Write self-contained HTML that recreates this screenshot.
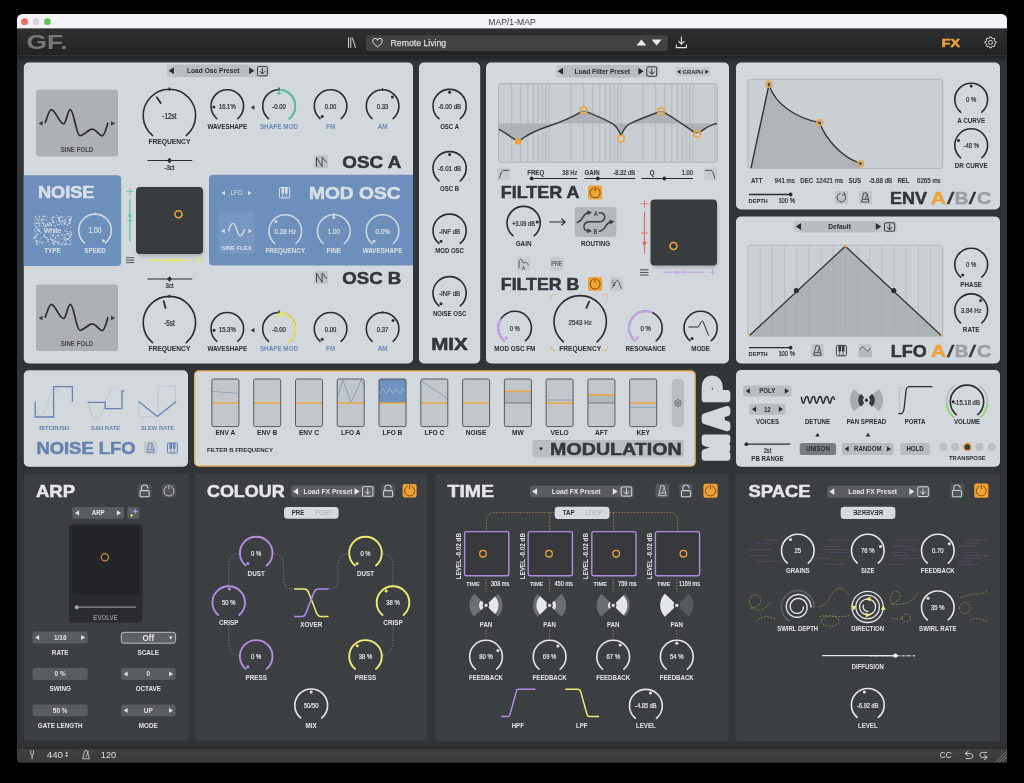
<!DOCTYPE html>
<html lang="en"><head><meta charset="utf-8"><title>MAP/1-MAP</title>
<style>html,body{margin:0;padding:0;background:#000;overflow:hidden}svg{display:block;font-family:"Liberation Sans",sans-serif;will-change:transform}text{white-space:pre}</style></head>
<body>
<svg width="1024" height="783" viewBox="0 0 1024 783">
<defs><linearGradient id="tb" x1="0" y1="0" x2="0" y2="1"><stop offset="0" stop-color="#303032"/><stop offset="1" stop-color="#222224"/></linearGradient><linearGradient id="bb" x1="0" y1="0" x2="0" y2="1"><stop offset="0" stop-color="#3f4042"/><stop offset="1" stop-color="#38393b"/></linearGradient><clipPath id="win"><path d="M17 19.5a5.5 5.5 0 0 1 5.5-5.5H1001.5a5.5 5.5 0 0 1 5.5 5.5V762.6H21a4 4 0 0 1-4-4Z"/></clipPath><linearGradient id="ts" x1="0" y1="0" x2="0" y2="1"><stop offset="0" stop-color="#1e1f20"/><stop offset="1" stop-color="#323537"/></linearGradient><linearGradient id="bs" x1="0" y1="0" x2="0" y2="1"><stop offset="0" stop-color="#323537"/><stop offset="1" stop-color="#2b2c2e"/></linearGradient><filter id="sh" x="-20%" y="-20%" width="140%" height="150%"><feGaussianBlur stdDeviation="1.6"/></filter></defs>
<rect width="1024" height="783" fill="#000"/>
<g clip-path="url(#win)">
<rect x="17.0" y="14.0" width="990.0" height="749.0" rx="0" fill="#323537"/>
<rect x="17.0" y="14.0" width="990.0" height="14.6" rx="0" fill="#f5f3f7"/>
<circle cx="24.5" cy="21.7" r="3.35" fill="#ee6a5e"/>
<circle cx="36.1" cy="21.7" r="3.35" fill="#d5d3d6"/>
<circle cx="47.4" cy="21.7" r="3.35" fill="#61c354"/>
<text x="512.0" y="24.8" font-size="8.6" font-weight="400" text-anchor="middle" fill="#3a3a3c" textLength="47.3" lengthAdjust="spacingAndGlyphs">MAP/1-MAP</text>
<rect x="17.0" y="28.6" width="990.0" height="26.9" rx="0" fill="url(#tb)"/>
<rect x="17.0" y="55.5" width="990.0" height="7.0" rx="0" fill="url(#ts)"/>
<line x1="17.0" y1="55.4" x2="1007.0" y2="55.4" stroke="#3a3b3c" stroke-width="0.6"/>
<rect x="17.0" y="742.0" width="990.0" height="7.0" rx="0" fill="url(#bs)"/>
<rect x="17.0" y="749.0" width="990.0" height="14.0" rx="0" fill="url(#bb)"/>
<text x="26.6" y="49.4" font-size="19.5" font-weight="700" text-anchor="start" fill="#77787a" textLength="41.0" lengthAdjust="spacingAndGlyphs">GF.</text>
<line x1="348.5" y1="37.4" x2="348.5" y2="47.8" stroke="#d8d8da" stroke-width="1"/>
<line x1="350.8" y1="37.4" x2="350.8" y2="47.8" stroke="#d8d8da" stroke-width="1"/>
<line x1="352.3" y1="37.6" x2="355.5" y2="47.8" stroke="#d8d8da" stroke-width="1"/>
<rect x="366.0" y="35.2" width="301.8" height="15.8" rx="3" fill="#424244"/>
<path d="M377.5 46.8C374.2 44.4 372.8 42.8 372.8 41.1A2.35 2.35 0 0 1 377.5 40.4A2.35 2.35 0 0 1 382.2 41.1C382.2 42.8 380.8 44.4 377.5 46.8Z" fill="none" stroke="#e4e4e6" stroke-width="1" stroke-linejoin="round"/>
<text x="390.6" y="46.4" font-size="9.4" font-weight="400" text-anchor="start" fill="#dededf" textLength="55.6" lengthAdjust="spacingAndGlyphs" stroke="#dededf" stroke-width="0.25">Remote Living</text>
<polygon points="636.4,45.4 646.4,45.4 641.4,39.4" fill="#ececee"/>
<polygon points="651.6,39.6 661.6,39.6 656.6,45.6" fill="#ececee"/>
<path d="M681.4 36.6V44M678.4 41.2L681.4 44.2L684.4 41.2M676.4 44.4V47.6H686.4V44.4" fill="none" stroke="#e4e4e6" stroke-width="1.1"/>
<text x="941.8" y="46.7" font-size="11" font-weight="700" text-anchor="start" fill="#f0a335" textLength="18.2" lengthAdjust="spacingAndGlyphs" stroke="#f0a335" stroke-width="0.5" stroke-linejoin="round">FX</text>
<polygon points="989.87,36.84 991.13,36.84 991.70,38.20 992.62,38.58 993.99,38.02 994.88,38.91 994.32,40.28 994.70,41.20 996.06,41.77 996.06,43.03 994.70,43.60 994.32,44.52 994.88,45.89 993.99,46.78 992.62,46.22 991.70,46.60 991.13,47.96 989.87,47.96 989.30,46.60 988.38,46.22 987.01,46.78 986.12,45.89 986.68,44.52 986.30,43.60 984.94,43.03 984.94,41.77 986.30,41.20 986.68,40.28 986.12,38.91 987.01,38.02 988.38,38.58 989.30,38.20" fill="none" stroke="#dcdcde" stroke-width="1" stroke-linejoin="round"/>
<circle cx="990.5" cy="42.4" r="2.016" fill="none" stroke="#dcdcde" stroke-width="1"/>
<rect x="23.8" y="62.5" width="389.2" height="301.0" rx="5" fill="#d2d8dc"/>
<rect x="419.0" y="62.5" width="61.2" height="301.0" rx="5" fill="#d2d8dc"/>
<rect x="486.0" y="62.5" width="243.0" height="301.0" rx="5" fill="#d2d8dc"/>
<rect x="736.0" y="62.5" width="264.0" height="147.0" rx="5" fill="#d2d8dc"/>
<rect x="736.0" y="216.5" width="264.0" height="147.0" rx="5" fill="#d2d8dc"/>
<rect x="23.8" y="370.3" width="164.2" height="96.4" rx="5" fill="#d2d8dc"/>
<rect x="736.0" y="370.0" width="264.0" height="96.7" rx="5" fill="#d2d8dc"/>
<rect x="194.7" y="371.0" width="500.4" height="95.0" rx="4" fill="#d2d8dc" stroke="#e6b062" stroke-width="1.4"/>
<rect x="23.8" y="473.8" width="165.2" height="266.8" rx="3.5" fill="#3b3f42"/>
<rect x="194.6" y="473.8" width="232.9" height="266.8" rx="3.5" fill="#3b3f42"/>
<rect x="435.4" y="473.8" width="293.4" height="267.0" rx="3.5" fill="#3b3f42"/>
<rect x="735.4" y="473.8" width="264.6" height="267.2" rx="3.5" fill="#3b3f42"/>
<rect x="167.0" y="64.6" width="102.4" height="12.4" rx="2.5" fill="#c1c7ca"/>
<rect x="174.8" y="64.6" width="73.8" height="12.4" rx="0" fill="#b7bdc0"/>
<polygon points="173.9,67.3 173.9,74.3 168.5,70.8" fill="#2b2d30"/>
<polygon points="249.1,67.3 249.1,74.3 254.5,70.8" fill="#2b2d30"/>
<text x="213.2" y="73.2" font-size="6.8" font-weight="700" text-anchor="middle" fill="#2b2d30" textLength="52.5" lengthAdjust="spacingAndGlyphs">Load Osc Preset</text>
<rect x="257.5" y="66.5" width="9.8" height="9.4" rx="1.2" fill="none" stroke="#2b2d30" stroke-width="0.9"/>
<path d="M262.4 68.2V73.8M259.8 71.2L262.4 74.0L265.0 71.2" fill="none" stroke="#2b2d30" stroke-width="0.9"/>
<rect x="36.0" y="89.8" width="82.0" height="66.7" rx="3" fill="#adb1b4"/>
<path d="M45.3 122.4C47 118.0 49 109.6 51.4 109.6C55 109.6 59.5 123.8 63.5 123.8C66.5 123.8 67.5 109.6 70.3 109.6C74 109.6 76 135.6 80 135.6C84 135.6 88.5 129.2 92.2 129.2C96 129.2 99 135.8 102.2 135.8C104.6 135.8 106.4 128.0 107.8 123.2" fill="none" stroke="#2b2d30" stroke-width="1.7" stroke-linecap="round"/>
<polygon points="42.6,121.0 42.6,125.8 38.6,123.4" fill="#3a3c3f"/>
<polygon points="111.0,121.0 111.0,125.8 115.0,123.4" fill="#3a3c3f"/>
<text x="77.0" y="151.6" font-size="6.4" font-weight="700" text-anchor="middle" fill="#45474a" textLength="32.6" lengthAdjust="spacingAndGlyphs">SINE FOLD</text>
<path d="M152.56 135.57A26.2 26.2 0 1 1 186.24 135.57" fill="none" stroke="#2b2d30" stroke-width="1.6" stroke-linecap="round"/>
<line x1="156.7" y1="97.3" x2="160.7" y2="103.0" stroke="#2b2d30" stroke-width="1.8" stroke-linecap="round"/>
<text x="169.4" y="118.5" font-size="8.2" font-weight="400" text-anchor="middle" fill="#2b2d30" textLength="14.2" lengthAdjust="spacingAndGlyphs" stroke="#2b2d30" stroke-width="0.22">-12st</text>
<text x="169.4" y="143.6" font-size="7" font-weight="700" text-anchor="middle" fill="#2b2d30" textLength="42.0" lengthAdjust="spacingAndGlyphs">FREQUENCY</text>
<line x1="169.4" y1="87.6" x2="169.4" y2="90.8" stroke="#2b2d30" stroke-width="1.6"/>
<line x1="147.5" y1="160.5" x2="192.2" y2="160.5" stroke="#2b2d30" stroke-width="1.2"/>
<polygon points="169.5,157.7 172,160.5 169.5,163.3 167,160.5" fill="#2b2d30"/>
<text x="169.5" y="169.8" font-size="7.8" font-weight="400" text-anchor="middle" fill="#2b2d30" textLength="10.1" lengthAdjust="spacingAndGlyphs" stroke="#2b2d30" stroke-width="0.22">-3ct</text>
<path d="M216.82 118.59A16.3 16.3 0 1 1 237.78 118.59" fill="none" stroke="#2b2d30" stroke-width="1.6" stroke-linecap="round"/>
<circle cx="213.9" cy="107.0" r="1.5" fill="#2b2d30"/>
<text x="227.3" y="108.8" font-size="7.6" font-weight="400" text-anchor="middle" fill="#2b2d30" textLength="16.8" lengthAdjust="spacingAndGlyphs" stroke="#2b2d30" stroke-width="0.22">16.1%</text>
<text x="227.3" y="128.6" font-size="6.6" font-weight="700" text-anchor="middle" fill="#2b2d30" textLength="39.8" lengthAdjust="spacingAndGlyphs">WAVESHAPE</text>
<polygon points="254.4,105.2 254.4,109.8 250.8,107.5" fill="#2b2d30"/>
<path d="M268.52 118.59A16.3 16.3 0 1 1 289.48 118.59" fill="none" stroke="#2b2d30" stroke-width="1.6" stroke-linecap="round"/>
<path d="M279.00 89.80A16.3 16.3 0 0 1 289.48 118.59" fill="none" stroke="#62c2ab" stroke-width="2.0" stroke-linecap="round"/>
<text x="279.0" y="108.8" font-size="7.6" font-weight="400" text-anchor="middle" fill="#2b2d30" textLength="13.5" lengthAdjust="spacingAndGlyphs" stroke="#2b2d30" stroke-width="0.22">-0.00</text>
<text x="279.0" y="128.6" font-size="6.6" font-weight="700" text-anchor="middle" fill="#6a8cba" textLength="38.2" lengthAdjust="spacingAndGlyphs">SHAPE MOD</text>
<line x1="279.0" y1="87.5" x2="279.0" y2="90.3" stroke="#2b2d30" stroke-width="1.2"/>
<circle cx="279.0" cy="93.2" r="1.7" fill="#62c2ab"/>
<path d="M320.12 118.59A16.3 16.3 0 1 1 341.08 118.59" fill="none" stroke="#2b2d30" stroke-width="1.6" stroke-linecap="round"/>
<circle cx="322.2" cy="116.5" r="1.5" fill="#2b2d30"/>
<text x="330.6" y="108.8" font-size="7.6" font-weight="400" text-anchor="middle" fill="#2b2d30" textLength="11.5" lengthAdjust="spacingAndGlyphs" stroke="#2b2d30" stroke-width="0.22">0.00</text>
<text x="330.6" y="128.6" font-size="6.6" font-weight="700" text-anchor="middle" fill="#6a8cba" textLength="9.1" lengthAdjust="spacingAndGlyphs">FM</text>
<path d="M372.12 118.59A16.3 16.3 0 1 1 393.08 118.59" fill="none" stroke="#2b2d30" stroke-width="1.6" stroke-linecap="round"/>
<line x1="382.6" y1="88.2" x2="382.6" y2="91.0" stroke="#2b2d30" stroke-width="1.2"/>
<circle cx="392.4" cy="97.0" r="1.5" fill="#2b2d30"/>
<text x="382.6" y="108.8" font-size="7.6" font-weight="400" text-anchor="middle" fill="#2b2d30" textLength="11.5" lengthAdjust="spacingAndGlyphs" stroke="#2b2d30" stroke-width="0.22">0.33</text>
<text x="382.6" y="128.6" font-size="6.6" font-weight="700" text-anchor="middle" fill="#6a8cba" textLength="9.8" lengthAdjust="spacingAndGlyphs">AM</text>
<rect x="314.5" y="155.3" width="13.3" height="12.9" rx="1" fill="#bcc2c5"/>
<path d="M316.5 166.7V157.3L322.1 166.7V157.3L326.8 162.8" fill="none" stroke="#3a3c40" stroke-width="0.9"/>
<text x="342.3" y="168.1" font-size="16.2" font-weight="700" text-anchor="start" fill="#34363a" textLength="59.0" lengthAdjust="spacingAndGlyphs" stroke="#34363a" stroke-width="0.5" stroke-linejoin="round">OSC A</text>
<path d="M23.8 175.2H117.2a4 4 0 0 1 4 4V262a4 4 0 0 1-4 4H23.8Z" fill="#6c8fbb"/>
<text x="37.9" y="197.9" font-size="16.2" font-weight="700" text-anchor="start" fill="#d9e0e5" textLength="56.6" lengthAdjust="spacingAndGlyphs" stroke="#d9e0e5" stroke-width="0.5" stroke-linejoin="round">NOISE</text>
<rect x="45.8" y="219.6" width="1.2" height="1.2" rx="0" fill="#dfe6ec" opacity="0.58"/>
<rect x="53.9" y="225.8" width="0.7" height="0.7" rx="0" fill="#dfe6ec" opacity="0.78"/>
<rect x="34.9" y="227.8" width="0.7" height="0.7" rx="0" fill="#dfe6ec" opacity="0.59"/>
<rect x="49.6" y="239.2" width="0.7" height="0.7" rx="0" fill="#dfe6ec" opacity="0.65"/>
<rect x="57.3" y="242.7" width="1.1" height="1.1" rx="0" fill="#dfe6ec" opacity="0.73"/>
<rect x="70.6" y="216.6" width="1.4" height="1.4" rx="0" fill="#dfe6ec" opacity="0.68"/>
<rect x="39.0" y="218.6" width="0.9" height="0.9" rx="0" fill="#dfe6ec" opacity="0.92"/>
<rect x="40.4" y="232.1" width="1.2" height="1.2" rx="0" fill="#dfe6ec" opacity="0.72"/>
<rect x="54.3" y="217.0" width="0.7" height="0.7" rx="0" fill="#dfe6ec" opacity="0.64"/>
<rect x="50.7" y="223.9" width="1.3" height="1.3" rx="0" fill="#dfe6ec" opacity="0.86"/>
<rect x="53.5" y="240.6" width="1.3" height="1.3" rx="0" fill="#dfe6ec" opacity="0.68"/>
<rect x="70.7" y="218.6" width="1.0" height="1.0" rx="0" fill="#dfe6ec" opacity="0.89"/>
<rect x="39.3" y="229.4" width="0.6" height="0.6" rx="0" fill="#dfe6ec" opacity="0.85"/>
<rect x="66.8" y="224.3" width="1.2" height="1.2" rx="0" fill="#dfe6ec" opacity="0.82"/>
<rect x="65.4" y="242.6" width="1.0" height="1.0" rx="0" fill="#dfe6ec" opacity="0.85"/>
<rect x="35.8" y="235.5" width="1.2" height="1.2" rx="0" fill="#dfe6ec" opacity="1.00"/>
<rect x="64.7" y="223.5" width="0.9" height="0.9" rx="0" fill="#dfe6ec" opacity="0.85"/>
<rect x="34.4" y="228.6" width="0.8" height="0.8" rx="0" fill="#dfe6ec" opacity="0.60"/>
<rect x="35.7" y="237.5" width="0.7" height="0.7" rx="0" fill="#dfe6ec" opacity="0.66"/>
<rect x="48.4" y="240.5" width="0.7" height="0.7" rx="0" fill="#dfe6ec" opacity="0.75"/>
<rect x="54.4" y="240.8" width="1.3" height="1.3" rx="0" fill="#dfe6ec" opacity="0.94"/>
<rect x="47.1" y="240.8" width="1.5" height="1.5" rx="0" fill="#dfe6ec" opacity="0.62"/>
<rect x="40.2" y="221.9" width="0.8" height="0.8" rx="0" fill="#dfe6ec" opacity="0.77"/>
<rect x="55.9" y="222.8" width="0.6" height="0.6" rx="0" fill="#dfe6ec" opacity="0.74"/>
<rect x="69.7" y="235.2" width="1.1" height="1.1" rx="0" fill="#dfe6ec" opacity="0.83"/>
<rect x="59.2" y="216.8" width="1.4" height="1.4" rx="0" fill="#dfe6ec" opacity="0.90"/>
<rect x="66.7" y="238.3" width="1.0" height="1.0" rx="0" fill="#dfe6ec" opacity="0.73"/>
<rect x="37.4" y="233.6" width="0.7" height="0.7" rx="0" fill="#dfe6ec" opacity="0.58"/>
<rect x="41.4" y="219.9" width="0.9" height="0.9" rx="0" fill="#dfe6ec" opacity="0.57"/>
<rect x="33.5" y="219.6" width="0.7" height="0.7" rx="0" fill="#dfe6ec" opacity="0.71"/>
<rect x="34.5" y="240.6" width="1.2" height="1.2" rx="0" fill="#dfe6ec" opacity="0.62"/>
<rect x="43.1" y="225.3" width="0.9" height="0.9" rx="0" fill="#dfe6ec" opacity="0.61"/>
<rect x="65.8" y="244.0" width="1.0" height="1.0" rx="0" fill="#dfe6ec" opacity="0.77"/>
<rect x="36.8" y="218.2" width="0.9" height="0.9" rx="0" fill="#dfe6ec" opacity="0.67"/>
<rect x="65.0" y="219.9" width="0.6" height="0.6" rx="0" fill="#dfe6ec" opacity="0.98"/>
<rect x="53.6" y="219.5" width="1.1" height="1.1" rx="0" fill="#dfe6ec" opacity="0.56"/>
<rect x="53.6" y="243.6" width="1.4" height="1.4" rx="0" fill="#dfe6ec" opacity="0.86"/>
<rect x="43.4" y="225.8" width="0.8" height="0.8" rx="0" fill="#dfe6ec" opacity="0.90"/>
<rect x="53.7" y="237.8" width="0.9" height="0.9" rx="0" fill="#dfe6ec" opacity="0.65"/>
<rect x="64.3" y="243.8" width="1.4" height="1.4" rx="0" fill="#dfe6ec" opacity="0.91"/>
<rect x="64.6" y="236.7" width="0.8" height="0.8" rx="0" fill="#dfe6ec" opacity="0.78"/>
<rect x="47.0" y="216.0" width="0.6" height="0.6" rx="0" fill="#dfe6ec" opacity="0.68"/>
<rect x="43.3" y="235.3" width="1.5" height="1.5" rx="0" fill="#dfe6ec" opacity="0.75"/>
<rect x="69.1" y="243.9" width="1.5" height="1.5" rx="0" fill="#dfe6ec" opacity="0.71"/>
<rect x="41.9" y="221.8" width="0.8" height="0.8" rx="0" fill="#dfe6ec" opacity="0.64"/>
<rect x="57.2" y="241.3" width="1.4" height="1.4" rx="0" fill="#dfe6ec" opacity="0.77"/>
<rect x="58.3" y="238.4" width="0.7" height="0.7" rx="0" fill="#dfe6ec" opacity="0.85"/>
<rect x="68.1" y="237.9" width="1.3" height="1.3" rx="0" fill="#dfe6ec" opacity="0.77"/>
<rect x="40.3" y="238.1" width="0.9" height="0.9" rx="0" fill="#dfe6ec" opacity="0.91"/>
<rect x="70.4" y="226.7" width="1.0" height="1.0" rx="0" fill="#dfe6ec" opacity="0.98"/>
<rect x="61.0" y="220.1" width="0.7" height="0.7" rx="0" fill="#dfe6ec" opacity="0.62"/>
<rect x="67.9" y="238.6" width="0.7" height="0.7" rx="0" fill="#dfe6ec" opacity="0.92"/>
<rect x="70.8" y="234.3" width="0.9" height="0.9" rx="0" fill="#dfe6ec" opacity="0.80"/>
<rect x="38.5" y="215.6" width="1.5" height="1.5" rx="0" fill="#dfe6ec" opacity="0.84"/>
<rect x="53.5" y="242.3" width="1.0" height="1.0" rx="0" fill="#dfe6ec" opacity="0.94"/>
<rect x="64.9" y="221.3" width="0.8" height="0.8" rx="0" fill="#dfe6ec" opacity="0.68"/>
<rect x="38.5" y="241.6" width="0.9" height="0.9" rx="0" fill="#dfe6ec" opacity="0.76"/>
<rect x="55.7" y="241.4" width="1.0" height="1.0" rx="0" fill="#dfe6ec" opacity="0.96"/>
<rect x="53.4" y="215.7" width="1.0" height="1.0" rx="0" fill="#dfe6ec" opacity="0.63"/>
<rect x="33.6" y="238.4" width="0.8" height="0.8" rx="0" fill="#dfe6ec" opacity="0.76"/>
<rect x="54.6" y="237.9" width="0.7" height="0.7" rx="0" fill="#dfe6ec" opacity="0.80"/>
<rect x="42.9" y="223.2" width="1.3" height="1.3" rx="0" fill="#dfe6ec" opacity="0.78"/>
<rect x="54.8" y="237.2" width="1.4" height="1.4" rx="0" fill="#dfe6ec" opacity="0.75"/>
<rect x="53.0" y="235.3" width="1.0" height="1.0" rx="0" fill="#dfe6ec" opacity="0.79"/>
<rect x="51.7" y="242.5" width="1.2" height="1.2" rx="0" fill="#dfe6ec" opacity="0.94"/>
<rect x="69.3" y="222.7" width="1.1" height="1.1" rx="0" fill="#dfe6ec" opacity="0.97"/>
<rect x="65.4" y="219.2" width="0.7" height="0.7" rx="0" fill="#dfe6ec" opacity="0.75"/>
<rect x="36.3" y="222.2" width="0.7" height="0.7" rx="0" fill="#dfe6ec" opacity="0.85"/>
<rect x="63.3" y="241.2" width="0.7" height="0.7" rx="0" fill="#dfe6ec" opacity="0.87"/>
<rect x="58.6" y="219.3" width="1.4" height="1.4" rx="0" fill="#dfe6ec" opacity="0.99"/>
<rect x="41.8" y="242.8" width="1.0" height="1.0" rx="0" fill="#dfe6ec" opacity="0.77"/>
<rect x="71.1" y="239.3" width="0.7" height="0.7" rx="0" fill="#dfe6ec" opacity="0.74"/>
<rect x="53.1" y="225.0" width="0.8" height="0.8" rx="0" fill="#dfe6ec" opacity="0.69"/>
<rect x="60.9" y="215.8" width="1.1" height="1.1" rx="0" fill="#dfe6ec" opacity="0.75"/>
<rect x="34.2" y="224.8" width="1.2" height="1.2" rx="0" fill="#dfe6ec" opacity="0.78"/>
<rect x="35.9" y="243.8" width="1.3" height="1.3" rx="0" fill="#dfe6ec" opacity="0.99"/>
<rect x="37.5" y="222.9" width="0.6" height="0.6" rx="0" fill="#dfe6ec" opacity="0.90"/>
<rect x="43.8" y="219.0" width="1.0" height="1.0" rx="0" fill="#dfe6ec" opacity="0.96"/>
<rect x="64.6" y="222.7" width="0.7" height="0.7" rx="0" fill="#dfe6ec" opacity="0.96"/>
<rect x="55.2" y="235.5" width="0.7" height="0.7" rx="0" fill="#dfe6ec" opacity="0.58"/>
<rect x="36.3" y="242.4" width="1.2" height="1.2" rx="0" fill="#dfe6ec" opacity="0.91"/>
<rect x="36.7" y="240.0" width="0.7" height="0.7" rx="0" fill="#dfe6ec" opacity="0.94"/>
<rect x="50.7" y="225.0" width="1.1" height="1.1" rx="0" fill="#dfe6ec" opacity="0.97"/>
<rect x="43.7" y="218.9" width="1.1" height="1.1" rx="0" fill="#dfe6ec" opacity="0.66"/>
<rect x="37.7" y="219.9" width="0.6" height="0.6" rx="0" fill="#dfe6ec" opacity="0.64"/>
<rect x="45.4" y="224.0" width="1.3" height="1.3" rx="0" fill="#dfe6ec" opacity="0.68"/>
<rect x="52.5" y="220.4" width="0.9" height="0.9" rx="0" fill="#dfe6ec" opacity="0.56"/>
<rect x="43.0" y="215.6" width="1.3" height="1.3" rx="0" fill="#dfe6ec" opacity="0.80"/>
<rect x="69.0" y="218.3" width="1.3" height="1.3" rx="0" fill="#dfe6ec" opacity="0.74"/>
<rect x="52.3" y="239.4" width="1.0" height="1.0" rx="0" fill="#dfe6ec" opacity="0.78"/>
<rect x="59.6" y="243.7" width="0.9" height="0.9" rx="0" fill="#dfe6ec" opacity="0.92"/>
<rect x="60.4" y="233.6" width="1.0" height="1.0" rx="0" fill="#dfe6ec" opacity="0.71"/>
<rect x="35.6" y="219.0" width="0.7" height="0.7" rx="0" fill="#dfe6ec" opacity="0.88"/>
<rect x="43.2" y="219.9" width="0.7" height="0.7" rx="0" fill="#dfe6ec" opacity="0.93"/>
<rect x="66.6" y="234.6" width="0.9" height="0.9" rx="0" fill="#dfe6ec" opacity="0.66"/>
<rect x="39.5" y="228.1" width="0.8" height="0.8" rx="0" fill="#dfe6ec" opacity="0.98"/>
<rect x="70.5" y="231.1" width="0.8" height="0.8" rx="0" fill="#dfe6ec" opacity="0.98"/>
<rect x="45.3" y="225.5" width="0.6" height="0.6" rx="0" fill="#dfe6ec" opacity="0.72"/>
<rect x="33.7" y="222.9" width="0.7" height="0.7" rx="0" fill="#dfe6ec" opacity="0.73"/>
<rect x="35.1" y="215.9" width="0.9" height="0.9" rx="0" fill="#dfe6ec" opacity="0.65"/>
<rect x="62.0" y="234.3" width="1.2" height="1.2" rx="0" fill="#dfe6ec" opacity="0.95"/>
<rect x="48.3" y="224.7" width="1.5" height="1.5" rx="0" fill="#dfe6ec" opacity="0.62"/>
<rect x="61.0" y="233.9" width="0.6" height="0.6" rx="0" fill="#dfe6ec" opacity="0.93"/>
<rect x="67.4" y="233.4" width="1.3" height="1.3" rx="0" fill="#dfe6ec" opacity="0.92"/>
<rect x="38.8" y="230.4" width="1.1" height="1.1" rx="0" fill="#dfe6ec" opacity="0.93"/>
<rect x="64.1" y="239.2" width="1.1" height="1.1" rx="0" fill="#dfe6ec" opacity="0.95"/>
<rect x="59.5" y="235.3" width="0.8" height="0.8" rx="0" fill="#dfe6ec" opacity="0.56"/>
<rect x="38.6" y="225.7" width="0.7" height="0.7" rx="0" fill="#dfe6ec" opacity="0.93"/>
<rect x="57.3" y="234.9" width="1.0" height="1.0" rx="0" fill="#dfe6ec" opacity="0.55"/>
<rect x="63.8" y="236.9" width="1.1" height="1.1" rx="0" fill="#dfe6ec" opacity="0.79"/>
<rect x="58.6" y="217.1" width="1.3" height="1.3" rx="0" fill="#dfe6ec" opacity="0.66"/>
<rect x="36.3" y="222.9" width="1.3" height="1.3" rx="0" fill="#dfe6ec" opacity="0.64"/>
<rect x="61.6" y="243.5" width="1.0" height="1.0" rx="0" fill="#dfe6ec" opacity="0.72"/>
<rect x="51.7" y="235.0" width="1.3" height="1.3" rx="0" fill="#dfe6ec" opacity="0.83"/>
<rect x="57.9" y="217.4" width="0.7" height="0.7" rx="0" fill="#dfe6ec" opacity="0.66"/>
<rect x="61.7" y="224.0" width="1.1" height="1.1" rx="0" fill="#dfe6ec" opacity="0.56"/>
<rect x="35.8" y="223.0" width="1.2" height="1.2" rx="0" fill="#dfe6ec" opacity="0.86"/>
<rect x="59.2" y="223.6" width="1.1" height="1.1" rx="0" fill="#dfe6ec" opacity="0.76"/>
<rect x="51.2" y="218.6" width="1.4" height="1.4" rx="0" fill="#dfe6ec" opacity="0.64"/>
<rect x="70.7" y="242.4" width="0.6" height="0.6" rx="0" fill="#dfe6ec" opacity="0.76"/>
<rect x="64.7" y="243.3" width="1.0" height="1.0" rx="0" fill="#dfe6ec" opacity="0.67"/>
<rect x="41.5" y="242.6" width="0.8" height="0.8" rx="0" fill="#dfe6ec" opacity="0.81"/>
<rect x="38.9" y="230.4" width="1.5" height="1.5" rx="0" fill="#dfe6ec" opacity="0.61"/>
<rect x="64.7" y="230.0" width="1.4" height="1.4" rx="0" fill="#dfe6ec" opacity="0.87"/>
<rect x="42.3" y="241.2" width="1.0" height="1.0" rx="0" fill="#dfe6ec" opacity="0.56"/>
<rect x="33.6" y="229.5" width="1.0" height="1.0" rx="0" fill="#dfe6ec" opacity="0.69"/>
<rect x="38.8" y="225.2" width="0.9" height="0.9" rx="0" fill="#dfe6ec" opacity="0.93"/>
<rect x="33.6" y="237.0" width="1.4" height="1.4" rx="0" fill="#dfe6ec" opacity="0.60"/>
<rect x="68.7" y="235.9" width="1.4" height="1.4" rx="0" fill="#dfe6ec" opacity="0.68"/>
<rect x="71.5" y="232.3" width="0.9" height="0.9" rx="0" fill="#dfe6ec" opacity="0.74"/>
<rect x="44.0" y="216.6" width="0.7" height="0.7" rx="0" fill="#dfe6ec" opacity="0.93"/>
<rect x="44.4" y="242.3" width="0.8" height="0.8" rx="0" fill="#dfe6ec" opacity="0.67"/>
<rect x="52.9" y="220.7" width="0.9" height="0.9" rx="0" fill="#dfe6ec" opacity="0.98"/>
<rect x="67.1" y="238.7" width="1.2" height="1.2" rx="0" fill="#dfe6ec" opacity="0.96"/>
<rect x="69.2" y="231.1" width="1.2" height="1.2" rx="0" fill="#dfe6ec" opacity="0.57"/>
<rect x="62.1" y="233.9" width="0.9" height="0.9" rx="0" fill="#dfe6ec" opacity="0.57"/>
<rect x="68.7" y="218.9" width="1.0" height="1.0" rx="0" fill="#dfe6ec" opacity="0.70"/>
<rect x="44.8" y="236.6" width="1.5" height="1.5" rx="0" fill="#dfe6ec" opacity="0.67"/>
<rect x="58.4" y="223.9" width="1.1" height="1.1" rx="0" fill="#dfe6ec" opacity="0.73"/>
<rect x="39.9" y="219.9" width="0.8" height="0.8" rx="0" fill="#dfe6ec" opacity="0.96"/>
<rect x="52.4" y="221.6" width="1.4" height="1.4" rx="0" fill="#dfe6ec" opacity="1.00"/>
<rect x="50.6" y="219.2" width="0.8" height="0.8" rx="0" fill="#dfe6ec" opacity="0.59"/>
<rect x="46.5" y="217.8" width="0.8" height="0.8" rx="0" fill="#dfe6ec" opacity="0.67"/>
<rect x="55.1" y="240.9" width="1.3" height="1.3" rx="0" fill="#dfe6ec" opacity="0.74"/>
<rect x="47.8" y="225.0" width="0.7" height="0.7" rx="0" fill="#dfe6ec" opacity="0.67"/>
<rect x="70.3" y="218.9" width="1.1" height="1.1" rx="0" fill="#dfe6ec" opacity="0.83"/>
<rect x="66.3" y="221.5" width="0.8" height="0.8" rx="0" fill="#dfe6ec" opacity="0.66"/>
<rect x="69.7" y="239.8" width="1.4" height="1.4" rx="0" fill="#dfe6ec" opacity="0.56"/>
<rect x="34.7" y="235.8" width="1.4" height="1.4" rx="0" fill="#dfe6ec" opacity="0.76"/>
<rect x="55.8" y="215.2" width="1.0" height="1.0" rx="0" fill="#dfe6ec" opacity="0.97"/>
<rect x="64.9" y="240.0" width="1.5" height="1.5" rx="0" fill="#dfe6ec" opacity="0.66"/>
<rect x="37.6" y="219.7" width="1.1" height="1.1" rx="0" fill="#dfe6ec" opacity="0.86"/>
<rect x="69.3" y="236.1" width="1.2" height="1.2" rx="0" fill="#dfe6ec" opacity="0.89"/>
<rect x="35.0" y="237.9" width="0.8" height="0.8" rx="0" fill="#dfe6ec" opacity="0.96"/>
<rect x="58.0" y="224.0" width="0.7" height="0.7" rx="0" fill="#dfe6ec" opacity="0.66"/>
<rect x="57.7" y="235.5" width="0.7" height="0.7" rx="0" fill="#dfe6ec" opacity="0.58"/>
<rect x="48.2" y="221.7" width="1.1" height="1.1" rx="0" fill="#dfe6ec" opacity="0.55"/>
<rect x="69.9" y="233.9" width="1.4" height="1.4" rx="0" fill="#dfe6ec" opacity="0.76"/>
<rect x="42.4" y="222.4" width="1.5" height="1.5" rx="0" fill="#dfe6ec" opacity="0.87"/>
<rect x="45.2" y="215.8" width="1.0" height="1.0" rx="0" fill="#dfe6ec" opacity="0.85"/>
<rect x="49.5" y="222.7" width="1.2" height="1.2" rx="0" fill="#dfe6ec" opacity="0.97"/>
<rect x="42.1" y="216.2" width="0.9" height="0.9" rx="0" fill="#dfe6ec" opacity="0.74"/>
<rect x="59.4" y="220.9" width="1.3" height="1.3" rx="0" fill="#dfe6ec" opacity="0.88"/>
<rect x="52.7" y="221.2" width="1.5" height="1.5" rx="0" fill="#dfe6ec" opacity="0.69"/>
<rect x="64.7" y="221.9" width="0.8" height="0.8" rx="0" fill="#dfe6ec" opacity="0.89"/>
<rect x="44.7" y="242.8" width="1.0" height="1.0" rx="0" fill="#dfe6ec" opacity="0.63"/>
<rect x="58.8" y="242.7" width="0.7" height="0.7" rx="0" fill="#dfe6ec" opacity="0.73"/>
<rect x="41.6" y="243.4" width="0.7" height="0.7" rx="0" fill="#dfe6ec" opacity="0.57"/>
<rect x="35.8" y="226.6" width="1.4" height="1.4" rx="0" fill="#dfe6ec" opacity="0.95"/>
<rect x="61.3" y="244.1" width="1.4" height="1.4" rx="0" fill="#dfe6ec" opacity="0.70"/>
<rect x="40.5" y="242.3" width="1.3" height="1.3" rx="0" fill="#dfe6ec" opacity="0.56"/>
<rect x="47.7" y="224.8" width="0.8" height="0.8" rx="0" fill="#dfe6ec" opacity="0.55"/>
<rect x="44.1" y="225.4" width="1.5" height="1.5" rx="0" fill="#dfe6ec" opacity="0.61"/>
<rect x="70.1" y="221.2" width="0.9" height="0.9" rx="0" fill="#dfe6ec" opacity="0.92"/>
<rect x="64.7" y="227.7" width="0.6" height="0.6" rx="0" fill="#dfe6ec" opacity="0.76"/>
<rect x="47.7" y="241.9" width="0.8" height="0.8" rx="0" fill="#dfe6ec" opacity="0.71"/>
<rect x="67.6" y="216.1" width="1.0" height="1.0" rx="0" fill="#dfe6ec" opacity="0.92"/>
<rect x="62.6" y="216.4" width="0.6" height="0.6" rx="0" fill="#dfe6ec" opacity="0.58"/>
<rect x="68.5" y="222.7" width="1.3" height="1.3" rx="0" fill="#dfe6ec" opacity="0.95"/>
<rect x="46.4" y="223.1" width="1.5" height="1.5" rx="0" fill="#dfe6ec" opacity="0.83"/>
<rect x="43.5" y="236.0" width="0.9" height="0.9" rx="0" fill="#dfe6ec" opacity="0.67"/>
<rect x="33.6" y="237.1" width="1.4" height="1.4" rx="0" fill="#dfe6ec" opacity="0.84"/>
<rect x="69.3" y="215.9" width="0.8" height="0.8" rx="0" fill="#dfe6ec" opacity="0.76"/>
<rect x="69.9" y="242.9" width="0.9" height="0.9" rx="0" fill="#dfe6ec" opacity="0.66"/>
<rect x="68.8" y="220.5" width="1.3" height="1.3" rx="0" fill="#dfe6ec" opacity="0.88"/>
<rect x="64.8" y="237.6" width="1.1" height="1.1" rx="0" fill="#dfe6ec" opacity="0.70"/>
<rect x="45.6" y="225.7" width="1.3" height="1.3" rx="0" fill="#dfe6ec" opacity="0.59"/>
<rect x="41.0" y="237.0" width="0.8" height="0.8" rx="0" fill="#dfe6ec" opacity="0.58"/>
<rect x="34.8" y="231.2" width="0.9" height="0.9" rx="0" fill="#dfe6ec" opacity="0.99"/>
<rect x="67.1" y="243.8" width="0.8" height="0.8" rx="0" fill="#dfe6ec" opacity="0.59"/>
<rect x="37.2" y="229.7" width="1.2" height="1.2" rx="0" fill="#dfe6ec" opacity="0.75"/>
<rect x="57.1" y="234.7" width="1.3" height="1.3" rx="0" fill="#dfe6ec" opacity="0.93"/>
<rect x="58.7" y="218.7" width="1.4" height="1.4" rx="0" fill="#dfe6ec" opacity="0.68"/>
<rect x="61.5" y="221.0" width="0.8" height="0.8" rx="0" fill="#dfe6ec" opacity="0.66"/>
<rect x="39.3" y="240.8" width="1.1" height="1.1" rx="0" fill="#dfe6ec" opacity="0.70"/>
<rect x="48.6" y="244.0" width="1.1" height="1.1" rx="0" fill="#dfe6ec" opacity="0.65"/>
<rect x="64.2" y="234.1" width="1.5" height="1.5" rx="0" fill="#dfe6ec" opacity="0.60"/>
<rect x="51.5" y="239.0" width="1.4" height="1.4" rx="0" fill="#dfe6ec" opacity="0.96"/>
<rect x="35.0" y="223.7" width="0.7" height="0.7" rx="0" fill="#dfe6ec" opacity="0.64"/>
<rect x="70.5" y="232.1" width="1.4" height="1.4" rx="0" fill="#dfe6ec" opacity="0.72"/>
<rect x="66.4" y="228.2" width="0.8" height="0.8" rx="0" fill="#dfe6ec" opacity="0.90"/>
<rect x="69.4" y="218.3" width="1.1" height="1.1" rx="0" fill="#dfe6ec" opacity="0.83"/>
<rect x="41.8" y="225.9" width="0.7" height="0.7" rx="0" fill="#dfe6ec" opacity="0.64"/>
<rect x="58.3" y="221.1" width="0.6" height="0.6" rx="0" fill="#dfe6ec" opacity="0.70"/>
<rect x="59.3" y="220.6" width="0.9" height="0.9" rx="0" fill="#dfe6ec" opacity="0.64"/>
<rect x="35.9" y="218.1" width="1.0" height="1.0" rx="0" fill="#dfe6ec" opacity="0.80"/>
<rect x="57.8" y="217.8" width="0.7" height="0.7" rx="0" fill="#dfe6ec" opacity="0.86"/>
<rect x="49.1" y="223.4" width="0.9" height="0.9" rx="0" fill="#dfe6ec" opacity="0.98"/>
<rect x="66.3" y="244.1" width="0.9" height="0.9" rx="0" fill="#dfe6ec" opacity="0.64"/>
<rect x="61.2" y="221.1" width="0.6" height="0.6" rx="0" fill="#dfe6ec" opacity="0.96"/>
<rect x="49.6" y="239.0" width="1.0" height="1.0" rx="0" fill="#dfe6ec" opacity="0.95"/>
<rect x="51.0" y="219.9" width="0.6" height="0.6" rx="0" fill="#dfe6ec" opacity="0.80"/>
<rect x="57.8" y="241.6" width="0.7" height="0.7" rx="0" fill="#dfe6ec" opacity="0.83"/>
<rect x="39.0" y="223.4" width="1.1" height="1.1" rx="0" fill="#dfe6ec" opacity="0.97"/>
<rect x="37.6" y="229.4" width="1.3" height="1.3" rx="0" fill="#dfe6ec" opacity="0.99"/>
<rect x="41.0" y="218.9" width="1.4" height="1.4" rx="0" fill="#dfe6ec" opacity="0.99"/>
<rect x="51.8" y="216.7" width="1.4" height="1.4" rx="0" fill="#dfe6ec" opacity="0.72"/>
<rect x="67.9" y="233.2" width="1.3" height="1.3" rx="0" fill="#dfe6ec" opacity="0.62"/>
<rect x="63.4" y="221.6" width="1.0" height="1.0" rx="0" fill="#dfe6ec" opacity="0.93"/>
<rect x="65.0" y="220.5" width="0.8" height="0.8" rx="0" fill="#dfe6ec" opacity="0.73"/>
<rect x="38.2" y="222.4" width="1.3" height="1.3" rx="0" fill="#dfe6ec" opacity="0.95"/>
<rect x="35.1" y="231.5" width="1.3" height="1.3" rx="0" fill="#dfe6ec" opacity="0.57"/>
<rect x="65.4" y="218.6" width="1.1" height="1.1" rx="0" fill="#dfe6ec" opacity="0.80"/>
<rect x="57.3" y="224.1" width="1.0" height="1.0" rx="0" fill="#dfe6ec" opacity="0.81"/>
<rect x="49.7" y="234.3" width="1.0" height="1.0" rx="0" fill="#dfe6ec" opacity="0.75"/>
<rect x="34.4" y="233.1" width="1.0" height="1.0" rx="0" fill="#dfe6ec" opacity="0.66"/>
<rect x="62.5" y="237.8" width="1.0" height="1.0" rx="0" fill="#dfe6ec" opacity="0.63"/>
<rect x="51.5" y="218.3" width="0.7" height="0.7" rx="0" fill="#dfe6ec" opacity="0.74"/>
<rect x="37.0" y="228.0" width="1.1" height="1.1" rx="0" fill="#dfe6ec" opacity="0.57"/>
<rect x="57.7" y="217.6" width="1.3" height="1.3" rx="0" fill="#dfe6ec" opacity="0.90"/>
<rect x="52.9" y="216.8" width="1.1" height="1.1" rx="0" fill="#dfe6ec" opacity="0.72"/>
<rect x="69.6" y="219.1" width="1.4" height="1.4" rx="0" fill="#dfe6ec" opacity="1.00"/>
<rect x="61.3" y="238.8" width="0.8" height="0.8" rx="0" fill="#dfe6ec" opacity="0.99"/>
<rect x="52.2" y="242.9" width="1.4" height="1.4" rx="0" fill="#dfe6ec" opacity="0.62"/>
<rect x="63.5" y="242.2" width="0.7" height="0.7" rx="0" fill="#dfe6ec" opacity="0.71"/>
<rect x="62.2" y="219.8" width="1.4" height="1.4" rx="0" fill="#dfe6ec" opacity="0.67"/>
<rect x="64.5" y="219.4" width="1.1" height="1.1" rx="0" fill="#dfe6ec" opacity="0.96"/>
<rect x="41.4" y="222.8" width="1.1" height="1.1" rx="0" fill="#dfe6ec" opacity="0.69"/>
<rect x="34.9" y="220.5" width="0.7" height="0.7" rx="0" fill="#dfe6ec" opacity="0.97"/>
<rect x="59.3" y="241.2" width="0.8" height="0.8" rx="0" fill="#dfe6ec" opacity="0.90"/>
<rect x="37.9" y="230.6" width="1.2" height="1.2" rx="0" fill="#dfe6ec" opacity="0.71"/>
<rect x="66.7" y="231.3" width="1.1" height="1.1" rx="0" fill="#dfe6ec" opacity="0.95"/>
<rect x="37.5" y="244.0" width="1.2" height="1.2" rx="0" fill="#dfe6ec" opacity="0.73"/>
<rect x="63.8" y="222.9" width="1.5" height="1.5" rx="0" fill="#dfe6ec" opacity="0.81"/>
<rect x="47.2" y="237.4" width="1.0" height="1.0" rx="0" fill="#dfe6ec" opacity="0.63"/>
<rect x="61.8" y="216.6" width="1.3" height="1.3" rx="0" fill="#dfe6ec" opacity="0.66"/>
<rect x="57.8" y="243.7" width="1.1" height="1.1" rx="0" fill="#dfe6ec" opacity="0.85"/>
<rect x="45.4" y="215.3" width="0.6" height="0.6" rx="0" fill="#dfe6ec" opacity="0.62"/>
<rect x="53.0" y="241.2" width="0.7" height="0.7" rx="0" fill="#dfe6ec" opacity="0.65"/>
<rect x="58.3" y="215.8" width="0.6" height="0.6" rx="0" fill="#dfe6ec" opacity="0.71"/>
<rect x="37.5" y="225.6" width="0.8" height="0.8" rx="0" fill="#dfe6ec" opacity="0.81"/>
<rect x="55.9" y="221.1" width="1.2" height="1.2" rx="0" fill="#dfe6ec" opacity="0.76"/>
<rect x="38.6" y="242.4" width="0.8" height="0.8" rx="0" fill="#dfe6ec" opacity="0.62"/>
<rect x="37.1" y="233.7" width="1.4" height="1.4" rx="0" fill="#dfe6ec" opacity="0.90"/>
<rect x="48.8" y="222.9" width="0.6" height="0.6" rx="0" fill="#dfe6ec" opacity="0.84"/>
<rect x="54.9" y="225.4" width="1.2" height="1.2" rx="0" fill="#dfe6ec" opacity="0.75"/>
<rect x="69.1" y="236.5" width="0.8" height="0.8" rx="0" fill="#dfe6ec" opacity="0.96"/>
<rect x="35.2" y="230.6" width="1.0" height="1.0" rx="0" fill="#dfe6ec" opacity="0.66"/>
<rect x="35.7" y="237.8" width="0.6" height="0.6" rx="0" fill="#dfe6ec" opacity="0.80"/>
<rect x="69.3" y="219.3" width="0.8" height="0.8" rx="0" fill="#dfe6ec" opacity="0.82"/>
<rect x="52.8" y="233.8" width="1.3" height="1.3" rx="0" fill="#dfe6ec" opacity="0.63"/>
<rect x="45.3" y="223.9" width="0.6" height="0.6" rx="0" fill="#dfe6ec" opacity="0.95"/>
<rect x="63.3" y="235.9" width="0.6" height="0.6" rx="0" fill="#dfe6ec" opacity="0.93"/>
<rect x="42.1" y="218.3" width="0.8" height="0.8" rx="0" fill="#dfe6ec" opacity="0.57"/>
<rect x="46.2" y="236.9" width="1.2" height="1.2" rx="0" fill="#dfe6ec" opacity="0.93"/>
<rect x="60.5" y="222.9" width="1.1" height="1.1" rx="0" fill="#dfe6ec" opacity="0.75"/>
<rect x="43.6" y="233.8" width="1.5" height="1.5" rx="0" fill="#dfe6ec" opacity="0.65"/>
<rect x="66.9" y="215.6" width="0.8" height="0.8" rx="0" fill="#dfe6ec" opacity="0.66"/>
<rect x="61.8" y="242.6" width="1.3" height="1.3" rx="0" fill="#dfe6ec" opacity="0.70"/>
<rect x="66.9" y="224.7" width="0.8" height="0.8" rx="0" fill="#dfe6ec" opacity="0.96"/>
<rect x="57.5" y="235.3" width="1.2" height="1.2" rx="0" fill="#dfe6ec" opacity="0.99"/>
<rect x="51.3" y="239.6" width="1.2" height="1.2" rx="0" fill="#dfe6ec" opacity="0.94"/>
<rect x="50.1" y="236.2" width="1.1" height="1.1" rx="0" fill="#dfe6ec" opacity="0.69"/>
<rect x="36.5" y="241.6" width="0.7" height="0.7" rx="0" fill="#dfe6ec" opacity="0.56"/>
<rect x="37.6" y="242.1" width="0.9" height="0.9" rx="0" fill="#dfe6ec" opacity="0.61"/>
<rect x="34.6" y="216.4" width="1.2" height="1.2" rx="0" fill="#dfe6ec" opacity="0.84"/>
<rect x="60.0" y="236.6" width="0.7" height="0.7" rx="0" fill="#dfe6ec" opacity="0.82"/>
<rect x="47.3" y="238.9" width="1.3" height="1.3" rx="0" fill="#dfe6ec" opacity="0.95"/>
<rect x="36.0" y="240.4" width="1.4" height="1.4" rx="0" fill="#dfe6ec" opacity="0.97"/>
<rect x="37.6" y="221.2" width="0.7" height="0.7" rx="0" fill="#dfe6ec" opacity="0.57"/>
<rect x="65.7" y="238.7" width="1.2" height="1.2" rx="0" fill="#dfe6ec" opacity="0.92"/>
<rect x="57.5" y="223.5" width="0.7" height="0.7" rx="0" fill="#dfe6ec" opacity="0.59"/>
<rect x="62.3" y="221.1" width="0.9" height="0.9" rx="0" fill="#dfe6ec" opacity="0.74"/>
<rect x="34.3" y="222.6" width="0.9" height="0.9" rx="0" fill="#dfe6ec" opacity="0.87"/>
<rect x="47.5" y="224.5" width="1.5" height="1.5" rx="0" fill="#dfe6ec" opacity="0.78"/>
<rect x="65.9" y="233.1" width="0.6" height="0.6" rx="0" fill="#dfe6ec" opacity="0.74"/>
<rect x="50.1" y="237.6" width="0.9" height="0.9" rx="0" fill="#dfe6ec" opacity="0.87"/>
<text x="52.5" y="232.8" font-size="7.6" font-weight="400" text-anchor="middle" fill="#d9e0e5" textLength="17.7" lengthAdjust="spacingAndGlyphs" stroke="#d9e0e5" stroke-width="0.22">White</text>
<text x="52.5" y="253.0" font-size="6.6" font-weight="700" text-anchor="middle" fill="#d9e0e5" textLength="16.5" lengthAdjust="spacingAndGlyphs">TYPE</text>
<path d="M84.52 242.89A16.3 16.3 0 1 1 105.48 242.89" fill="none" stroke="#cdd8e6" stroke-width="1.6" stroke-linecap="round"/>
<line x1="95.0" y1="212.5" x2="95.0" y2="215.3" stroke="#cdd8e6" stroke-width="1.2"/>
<circle cx="103.4" cy="240.8" r="1.5" fill="#cdd8e6"/>
<text x="95.0" y="233.4" font-size="8.4" font-weight="400" text-anchor="middle" fill="#d9e0e5" textLength="12.8" lengthAdjust="spacingAndGlyphs" stroke="#d9e0e5" stroke-width="0.22">1.00</text>
<text x="95.0" y="253.0" font-size="6.6" font-weight="700" text-anchor="middle" fill="#d9e0e5" textLength="21.4" lengthAdjust="spacingAndGlyphs">SPEED</text>
<rect x="137.0" y="189.0" width="67.0" height="67.4" rx="5" fill="#8e9497" filter="url(#sh)" opacity="0.55"/>
<rect x="136.0" y="187.0" width="67.0" height="67.0" rx="4" fill="#393c3f"/>
<circle cx="178.5" cy="214.2" r="3.5" fill="none" stroke="#eaa63a" stroke-width="1.6"/>
<line x1="126.4" y1="191.4" x2="133.6" y2="191.4" stroke="#62c2ab" stroke-width="0.9"/>
<line x1="130.0" y1="187.8" x2="130.0" y2="195.0" stroke="#62c2ab" stroke-width="0.9"/>
<line x1="130.0" y1="199.0" x2="130.0" y2="241.2" stroke="#62c2ab" stroke-width="1.3"/>
<circle cx="130.0" cy="215.8" r="1.8" fill="#62c2ab"/>
<line x1="127.2" y1="220.8" x2="132.8" y2="220.8" stroke="#62c2ab" stroke-width="1.1"/>
<line x1="126.0" y1="257.8" x2="134.2" y2="257.8" stroke="#4a4d50" stroke-width="1"/>
<line x1="126.0" y1="260.2" x2="134.2" y2="260.2" stroke="#4a4d50" stroke-width="1"/>
<line x1="126.0" y1="262.6" x2="134.2" y2="262.6" stroke="#4a4d50" stroke-width="1"/>
<line x1="148.8" y1="260.3" x2="190.8" y2="260.3" stroke="#ece95f" stroke-width="1.3"/>
<line x1="169.7" y1="257.6" x2="169.7" y2="263.0" stroke="#ece95f" stroke-width="1.1"/>
<circle cx="176.2" cy="260.3" r="1.8" fill="#ece95f"/>
<line x1="194.7" y1="260.3" x2="201.9" y2="260.3" stroke="#ece95f" stroke-width="0.9"/>
<line x1="198.3" y1="256.7" x2="198.3" y2="263.9" stroke="#ece95f" stroke-width="0.9"/>
<path d="M413 174.7H213a4 4 0 0 0-4 4V261.5a4 4 0 0 0 4 4H413Z" fill="#6c8fbb"/>
<polygon points="225.0,190.7 225.0,195.3 221.4,193.0" fill="#d9e0e5"/>
<polygon points="248.0,190.7 248.0,195.3 251.6,193.0" fill="#d9e0e5"/>
<text x="236.5" y="195.4" font-size="6.4" font-weight="400" text-anchor="middle" fill="#d9e0e5" textLength="11.9" lengthAdjust="spacingAndGlyphs">LFO</text>
<rect x="279.4" y="187.5" width="10.3" height="10.5" rx="1.2" fill="none" stroke="#d9e0e5" stroke-width="1"/>
<line x1="282.8" y1="187.5" x2="282.8" y2="198.0" stroke="#d9e0e5" stroke-width="0.8"/>
<rect x="281.5" y="187.5" width="2.6" height="6.1" rx="0" fill="#d9e0e5"/>
<line x1="286.3" y1="187.5" x2="286.3" y2="198.0" stroke="#d9e0e5" stroke-width="0.8"/>
<rect x="285.0" y="187.5" width="2.6" height="6.1" rx="0" fill="#d9e0e5"/>
<text x="308.9" y="198.7" font-size="16.2" font-weight="700" text-anchor="start" fill="#d9e0e5" textLength="91.8" lengthAdjust="spacingAndGlyphs" stroke="#d9e0e5" stroke-width="0.5" stroke-linejoin="round">MOD OSC</text>
<rect x="218.3" y="211.2" width="36.5" height="42.8" rx="3" fill="#7597c1"/>
<path d="M228.6 231C230 226 231.6 223.4 233.2 223.4C236.4 223.4 237 235.8 240.2 235.8C241.8 235.8 243.2 233.4 244.6 229.6" fill="none" stroke="#d9e0e5" stroke-width="1.4" stroke-linecap="round"/>
<polygon points="224.8,228.7 224.8,233.3 221.2,231.0" fill="#d9e0e5"/>
<polygon points="248.4,228.7 248.4,233.3 252.0,231.0" fill="#d9e0e5"/>
<text x="236.5" y="249.6" font-size="6.2" font-weight="700" text-anchor="middle" fill="#d9e0e5" textLength="30.6" lengthAdjust="spacingAndGlyphs">SINE FLEX</text>
<path d="M274.82 243.49A16.3 16.3 0 1 1 295.78 243.49" fill="none" stroke="#cdd8e6" stroke-width="1.6" stroke-linecap="round"/>
<circle cx="275.8" cy="221.5" r="1.5" fill="#cdd8e6"/>
<text x="285.3" y="233.9" font-size="8" font-weight="400" text-anchor="middle" fill="#d9e0e5" textLength="21.5" lengthAdjust="spacingAndGlyphs" stroke="#d9e0e5" stroke-width="0.22">0.38 Hz</text>
<text x="285.3" y="253.4" font-size="6.6" font-weight="700" text-anchor="middle" fill="#d9e0e5" textLength="39.6" lengthAdjust="spacingAndGlyphs">FREQUENCY</text>
<path d="M323.32 243.49A16.3 16.3 0 1 1 344.28 243.49" fill="none" stroke="#cdd8e6" stroke-width="1.6" stroke-linecap="round"/>
<line x1="333.8" y1="213.1" x2="333.8" y2="215.9" stroke="#cdd8e6" stroke-width="1.2"/>
<circle cx="333.8" cy="217.6" r="1.5" fill="#cdd8e6"/>
<text x="333.8" y="233.9" font-size="8" font-weight="400" text-anchor="middle" fill="#d9e0e5" textLength="12.1" lengthAdjust="spacingAndGlyphs" stroke="#d9e0e5" stroke-width="0.22">1.00</text>
<text x="333.8" y="253.4" font-size="6.6" font-weight="700" text-anchor="middle" fill="#d9e0e5" textLength="14.4" lengthAdjust="spacingAndGlyphs">FINE</text>
<path d="M372.12 243.49A16.3 16.3 0 1 1 393.08 243.49" fill="none" stroke="#cdd8e6" stroke-width="1.6" stroke-linecap="round"/>
<circle cx="374.0" cy="241.3" r="1.5" fill="#cdd8e6"/>
<text x="382.6" y="233.9" font-size="8" font-weight="400" text-anchor="middle" fill="#d9e0e5" textLength="14.2" lengthAdjust="spacingAndGlyphs" stroke="#d9e0e5" stroke-width="0.22">0.0%</text>
<text x="382.6" y="253.4" font-size="6.6" font-weight="700" text-anchor="middle" fill="#d9e0e5" textLength="39.8" lengthAdjust="spacingAndGlyphs">WAVESHAPE</text>
<rect x="314.5" y="271.3" width="13.3" height="12.5" rx="1" fill="#bcc2c5"/>
<path d="M316.5 282.3V273.3L322.1 282.3V273.3L326.8 278.8" fill="none" stroke="#3a3c40" stroke-width="0.9"/>
<text x="342.3" y="283.7" font-size="16.2" font-weight="700" text-anchor="start" fill="#34363a" textLength="59.0" lengthAdjust="spacingAndGlyphs" stroke="#34363a" stroke-width="0.5" stroke-linejoin="round">OSC B</text>
<line x1="147.5" y1="279.0" x2="192.2" y2="279.0" stroke="#2b2d30" stroke-width="1.2"/>
<polygon points="169.5,276.2 172,279 169.5,281.8 167,279" fill="#2b2d30"/>
<text x="169.5" y="288.2" font-size="7.8" font-weight="400" text-anchor="middle" fill="#2b2d30" textLength="8.1" lengthAdjust="spacingAndGlyphs" stroke="#2b2d30" stroke-width="0.22">3ct</text>
<rect x="36.0" y="284.5" width="82.0" height="66.5" rx="3" fill="#adb1b4"/>
<path d="M45.3 317.1C47 312.7 49 304.3 51.4 304.3C55 304.3 59.5 318.5 63.5 318.5C66.5 318.5 67.5 304.3 70.3 304.3C74 304.3 76 330.3 80 330.3C84 330.3 88.5 323.9 92.2 323.9C96 323.9 99 330.5 102.2 330.5C104.6 330.5 106.4 322.7 107.8 317.9" fill="none" stroke="#2b2d30" stroke-width="1.7" stroke-linecap="round"/>
<polygon points="42.6,315.7 42.6,320.5 38.6,318.1" fill="#3a3c3f"/>
<polygon points="111.0,315.7 111.0,320.5 115.0,318.1" fill="#3a3c3f"/>
<text x="77.0" y="346.1" font-size="6.4" font-weight="700" text-anchor="middle" fill="#45474a" textLength="32.6" lengthAdjust="spacingAndGlyphs">SINE FOLD</text>
<path d="M152.56 342.67A26.2 26.2 0 1 1 186.24 342.67" fill="none" stroke="#2b2d30" stroke-width="1.6" stroke-linecap="round"/>
<line x1="163.7" y1="301.2" x2="165.5" y2="307.9" stroke="#2b2d30" stroke-width="1.8" stroke-linecap="round"/>
<text x="169.4" y="325.6" font-size="8.2" font-weight="400" text-anchor="middle" fill="#2b2d30" textLength="10.7" lengthAdjust="spacingAndGlyphs" stroke="#2b2d30" stroke-width="0.22">-5st</text>
<text x="169.4" y="350.6" font-size="7" font-weight="700" text-anchor="middle" fill="#2b2d30" textLength="42.0" lengthAdjust="spacingAndGlyphs">FREQUENCY</text>
<line x1="169.4" y1="294.7" x2="169.4" y2="297.9" stroke="#2b2d30" stroke-width="1.6"/>
<path d="M216.82 341.29A16.3 16.3 0 1 1 237.78 341.29" fill="none" stroke="#2b2d30" stroke-width="1.6" stroke-linecap="round"/>
<circle cx="214.0" cy="330.2" r="1.5" fill="#2b2d30"/>
<text x="227.3" y="331.5" font-size="7.6" font-weight="400" text-anchor="middle" fill="#2b2d30" textLength="16.8" lengthAdjust="spacingAndGlyphs" stroke="#2b2d30" stroke-width="0.22">15.3%</text>
<text x="227.3" y="350.6" font-size="6.6" font-weight="700" text-anchor="middle" fill="#2b2d30" textLength="39.8" lengthAdjust="spacingAndGlyphs">WAVESHAPE</text>
<polygon points="254.4,327.9 254.4,332.5 250.8,330.2" fill="#2b2d30"/>
<path d="M268.52 341.29A16.3 16.3 0 1 1 289.48 341.29" fill="none" stroke="#2b2d30" stroke-width="1.6" stroke-linecap="round"/>
<path d="M279.00 312.50A16.3 16.3 0 0 1 289.48 341.29" fill="none" stroke="#ece95f" stroke-width="2.0" stroke-linecap="round"/>
<text x="279.0" y="331.5" font-size="7.6" font-weight="400" text-anchor="middle" fill="#2b2d30" textLength="13.5" lengthAdjust="spacingAndGlyphs" stroke="#2b2d30" stroke-width="0.22">-0.00</text>
<text x="279.0" y="350.6" font-size="6.6" font-weight="700" text-anchor="middle" fill="#6a8cba" textLength="38.2" lengthAdjust="spacingAndGlyphs">SHAPE MOD</text>
<line x1="279.0" y1="310.2" x2="279.0" y2="313.0" stroke="#2b2d30" stroke-width="1.2"/>
<circle cx="279.0" cy="315.9" r="1.7" fill="#ece95f"/>
<path d="M320.12 341.29A16.3 16.3 0 1 1 341.08 341.29" fill="none" stroke="#2b2d30" stroke-width="1.6" stroke-linecap="round"/>
<circle cx="322.2" cy="339.2" r="1.5" fill="#2b2d30"/>
<text x="330.6" y="331.5" font-size="7.6" font-weight="400" text-anchor="middle" fill="#2b2d30" textLength="11.5" lengthAdjust="spacingAndGlyphs" stroke="#2b2d30" stroke-width="0.22">0.00</text>
<text x="330.6" y="350.6" font-size="6.6" font-weight="700" text-anchor="middle" fill="#6a8cba" textLength="9.1" lengthAdjust="spacingAndGlyphs">FM</text>
<path d="M372.12 341.29A16.3 16.3 0 1 1 393.08 341.29" fill="none" stroke="#2b2d30" stroke-width="1.6" stroke-linecap="round"/>
<line x1="382.6" y1="310.9" x2="382.6" y2="313.7" stroke="#2b2d30" stroke-width="1.2"/>
<circle cx="393.0" cy="320.4" r="1.5" fill="#2b2d30"/>
<text x="382.6" y="331.5" font-size="7.6" font-weight="400" text-anchor="middle" fill="#2b2d30" textLength="11.5" lengthAdjust="spacingAndGlyphs" stroke="#2b2d30" stroke-width="0.22">0.37</text>
<text x="382.6" y="350.6" font-size="6.6" font-weight="700" text-anchor="middle" fill="#6a8cba" textLength="9.8" lengthAdjust="spacingAndGlyphs">AM</text>
<path d="M438.93 118.72A16.6 16.6 0 1 1 460.27 118.72" fill="none" stroke="#2b2d30" stroke-width="1.6" stroke-linecap="round"/>
<circle cx="449.6" cy="92.3" r="1.5" fill="#2b2d30"/>
<text x="449.6" y="108.8" font-size="7.9" font-weight="400" text-anchor="middle" fill="#2b2d30" textLength="23.3" lengthAdjust="spacingAndGlyphs" stroke="#2b2d30" stroke-width="0.22">-6.00 dB</text>
<text x="449.6" y="128.6" font-size="6.3" font-weight="700" text-anchor="middle" fill="#2b2d30" textLength="18.8" lengthAdjust="spacingAndGlyphs">OSC A</text>
<path d="M438.93 180.92A16.6 16.6 0 1 1 460.27 180.92" fill="none" stroke="#2b2d30" stroke-width="1.6" stroke-linecap="round"/>
<circle cx="449.6" cy="154.5" r="1.5" fill="#2b2d30"/>
<text x="449.6" y="171.0" font-size="7.9" font-weight="400" text-anchor="middle" fill="#2b2d30" textLength="23.3" lengthAdjust="spacingAndGlyphs" stroke="#2b2d30" stroke-width="0.22">-6.01 dB</text>
<text x="449.6" y="190.8" font-size="6.3" font-weight="700" text-anchor="middle" fill="#2b2d30" textLength="19.1" lengthAdjust="spacingAndGlyphs">OSC B</text>
<path d="M438.93 243.42A16.6 16.6 0 1 1 460.27 243.42" fill="none" stroke="#2b2d30" stroke-width="1.6" stroke-linecap="round"/>
<circle cx="441.0" cy="241.3" r="1.5" fill="#2b2d30"/>
<text x="449.6" y="233.5" font-size="7.9" font-weight="400" text-anchor="middle" fill="#2b2d30" textLength="21.2" lengthAdjust="spacingAndGlyphs" stroke="#2b2d30" stroke-width="0.22">-INF dB</text>
<text x="449.6" y="253.3" font-size="6.3" font-weight="700" text-anchor="middle" fill="#2b2d30" textLength="28.7" lengthAdjust="spacingAndGlyphs">MOD OSC</text>
<path d="M438.93 305.92A16.6 16.6 0 1 1 460.27 305.92" fill="none" stroke="#2b2d30" stroke-width="1.6" stroke-linecap="round"/>
<circle cx="441.0" cy="303.8" r="1.5" fill="#2b2d30"/>
<text x="449.6" y="296.0" font-size="7.9" font-weight="400" text-anchor="middle" fill="#2b2d30" textLength="21.2" lengthAdjust="spacingAndGlyphs" stroke="#2b2d30" stroke-width="0.22">-INF dB</text>
<text x="449.6" y="315.8" font-size="6.3" font-weight="700" text-anchor="middle" fill="#2b2d30" textLength="33.4" lengthAdjust="spacingAndGlyphs">NOISE OSC</text>
<text x="431.2" y="350.1" font-size="16.2" font-weight="700" text-anchor="start" fill="#34363a" textLength="36.6" lengthAdjust="spacingAndGlyphs" stroke="#34363a" stroke-width="0.5" stroke-linejoin="round">MIX</text>
<rect x="556.0" y="65.0" width="102.8" height="12.4" rx="2.5" fill="#c1c7ca"/>
<rect x="564.0" y="65.0" width="73.8" height="12.4" rx="0" fill="#b7bdc0"/>
<polygon points="563.1,67.7 563.1,74.7 557.7,71.2" fill="#2b2d30"/>
<polygon points="638.3,67.7 638.3,74.7 643.7,71.2" fill="#2b2d30"/>
<text x="602.3" y="73.6" font-size="6.8" font-weight="700" text-anchor="middle" fill="#2b2d30" textLength="55.5" lengthAdjust="spacingAndGlyphs">Load Filter Preset</text>
<rect x="646.8" y="66.9" width="9.9" height="9.4" rx="1.2" fill="none" stroke="#2b2d30" stroke-width="0.9"/>
<path d="M651.8 68.6V74.2M649.1 71.6L651.8 74.4L654.4 71.6" fill="none" stroke="#2b2d30" stroke-width="0.9"/>
<rect x="675.5" y="67.0" width="34.8" height="9.4" rx="2" fill="#c3c9cc"/>
<polygon points="680.5,69.5 680.5,73.9 677.1,71.7" fill="#2b2d30"/>
<polygon points="705.3,69.5 705.3,73.9 708.7,71.7" fill="#2b2d30"/>
<text x="692.9" y="74.0" font-size="6.2" font-weight="700" text-anchor="middle" fill="#2b2d30" textLength="20.6" lengthAdjust="spacingAndGlyphs">GRAPH</text>
<rect x="498.5" y="83.6" width="218.8" height="78.7" rx="3" fill="#c8ced1" stroke="#a7adb0" stroke-width="0.8"/>
<clipPath id="fg"><rect x="498.9" y="84" width="218" height="77.9" rx="2.6"/></clipPath><g clip-path="url(#fg)">
<line x1="511.7" y1="83.6" x2="511.7" y2="162.3" stroke="#adb3b7" stroke-width="0.7"/>
<line x1="520.7" y1="83.6" x2="520.7" y2="162.3" stroke="#adb3b7" stroke-width="0.7"/>
<line x1="527.7" y1="83.6" x2="527.7" y2="162.3" stroke="#adb3b7" stroke-width="0.7"/>
<line x1="533.4" y1="83.6" x2="533.4" y2="162.3" stroke="#adb3b7" stroke-width="0.7"/>
<line x1="538.2" y1="83.6" x2="538.2" y2="162.3" stroke="#adb3b7" stroke-width="0.7"/>
<line x1="542.3" y1="83.6" x2="542.3" y2="162.3" stroke="#adb3b7" stroke-width="0.7"/>
<line x1="546.0" y1="83.6" x2="546.0" y2="162.3" stroke="#adb3b7" stroke-width="0.7"/>
<line x1="549.3" y1="83.6" x2="549.3" y2="162.3" stroke="#adb3b7" stroke-width="0.7"/>
<line x1="571.0" y1="83.6" x2="571.0" y2="162.3" stroke="#adb3b7" stroke-width="0.7"/>
<line x1="583.7" y1="83.6" x2="583.7" y2="162.3" stroke="#adb3b7" stroke-width="0.7"/>
<line x1="592.7" y1="83.6" x2="592.7" y2="162.3" stroke="#adb3b7" stroke-width="0.7"/>
<line x1="599.7" y1="83.6" x2="599.7" y2="162.3" stroke="#adb3b7" stroke-width="0.7"/>
<line x1="605.4" y1="83.6" x2="605.4" y2="162.3" stroke="#adb3b7" stroke-width="0.7"/>
<line x1="610.2" y1="83.6" x2="610.2" y2="162.3" stroke="#adb3b7" stroke-width="0.7"/>
<line x1="614.3" y1="83.6" x2="614.3" y2="162.3" stroke="#adb3b7" stroke-width="0.7"/>
<line x1="618.0" y1="83.6" x2="618.0" y2="162.3" stroke="#adb3b7" stroke-width="0.7"/>
<line x1="621.3" y1="83.6" x2="621.3" y2="162.3" stroke="#adb3b7" stroke-width="0.7"/>
<line x1="643.0" y1="83.6" x2="643.0" y2="162.3" stroke="#adb3b7" stroke-width="0.7"/>
<line x1="655.7" y1="83.6" x2="655.7" y2="162.3" stroke="#adb3b7" stroke-width="0.7"/>
<line x1="664.7" y1="83.6" x2="664.7" y2="162.3" stroke="#adb3b7" stroke-width="0.7"/>
<line x1="671.7" y1="83.6" x2="671.7" y2="162.3" stroke="#adb3b7" stroke-width="0.7"/>
<line x1="677.4" y1="83.6" x2="677.4" y2="162.3" stroke="#adb3b7" stroke-width="0.7"/>
<line x1="682.2" y1="83.6" x2="682.2" y2="162.3" stroke="#adb3b7" stroke-width="0.7"/>
<line x1="686.3" y1="83.6" x2="686.3" y2="162.3" stroke="#adb3b7" stroke-width="0.7"/>
<line x1="690.0" y1="83.6" x2="690.0" y2="162.3" stroke="#adb3b7" stroke-width="0.7"/>
<line x1="693.3" y1="83.6" x2="693.3" y2="162.3" stroke="#adb3b7" stroke-width="0.7"/>
<line x1="715.0" y1="83.6" x2="715.0" y2="162.3" stroke="#adb3b7" stroke-width="0.7"/>
<path d="M498.5 129.2C505 132.5 511 137.2 516 140.2C517.2 141 519 141 520.4 140C528 134.2 538 129.6 549 126C562 121.8 573 116.6 581.6 111.6C583 110.8 584.6 110.8 586 111.4C596 115.6 606 120 612 123.4C616.6 126 618.6 130 620.2 133.8C620.7 135 621.4 135 621.9 133.8C623.4 130 625.4 126 630 123.6C640 119 651 115 658.6 112C660 111.4 662 111.4 663.6 112.2C674 118 685 126 693.4 131.6C695.8 133.2 698.4 133.2 700.6 131.6C706 127.6 711 124.4 717.3 123.4L717.3 123.4L498.5 123.4Z" fill="#a9aeb2" fill-rule="evenodd" opacity="0.85"/>
<path d="M498.5 129.2C505 132.5 511 137.2 516 140.2C517.2 141 519 141 520.4 140C528 134.2 538 129.6 549 126C562 121.8 573 116.6 581.6 111.6C583 110.8 584.6 110.8 586 111.4C596 115.6 606 120 612 123.4C616.6 126 618.6 130 620.2 133.8C620.7 135 621.4 135 621.9 133.8C623.4 130 625.4 126 630 123.6C640 119 651 115 658.6 112C660 111.4 662 111.4 663.6 112.2C674 118 685 126 693.4 131.6C695.8 133.2 698.4 133.2 700.6 131.6C706 127.6 711 124.4 717.3 123.4" fill="none" stroke="#3a3c40" stroke-width="1.5"/>
</g>
<circle cx="518.0" cy="141.4" r="3.2" fill="#f0a335"/>
<circle cx="583.7" cy="110.2" r="3.3" fill="#e3e0d8" stroke="#f0a335" stroke-width="1.5" fill-opacity="0.45"/>
<circle cx="621.0" cy="138.6" r="3.3" fill="#e3e0d8" stroke="#f0a335" stroke-width="1.5" fill-opacity="0.45"/>
<circle cx="661.0" cy="111.4" r="3.3" fill="#e3e0d8" stroke="#f0a335" stroke-width="1.5" fill-opacity="0.45"/>
<circle cx="697.3" cy="133.7" r="3.3" fill="#e3e0d8" stroke="#f0a335" stroke-width="1.5" fill-opacity="0.45"/>
<rect x="497.2" y="167.8" width="12.9" height="12.5" rx="1.5" fill="#c5cbcf"/>
<path d="M499.4 178.6C500.6 174 501.4 170.8 503.4 170.4H508.8" fill="none" stroke="#3a3c40" stroke-width="0.9"/>
<rect x="704.0" y="167.8" width="13.0" height="12.5" rx="1.5" fill="#c5cbcf"/>
<path d="M705.4 170.4H710.8C712.8 170.8 713.6 174 714.8 178.6" fill="none" stroke="#3a3c40" stroke-width="0.9"/>
<line x1="529.7" y1="178.5" x2="577.3" y2="178.5" stroke="#2b2d30" stroke-width="1.2"/>
<circle cx="531.6" cy="178.5" r="1.9" fill="#2b2d30"/>
<text x="527.2" y="174.9" font-size="6.4" font-weight="700" text-anchor="start" fill="#2b2d30" textLength="17.0" lengthAdjust="spacingAndGlyphs">FREQ</text>
<text x="577.3" y="175.1" font-size="7.4" font-weight="400" text-anchor="end" fill="#2b2d30" textLength="15.1" lengthAdjust="spacingAndGlyphs" stroke="#2b2d30" stroke-width="0.22">38 Hz</text>
<line x1="584.4" y1="178.5" x2="635.1" y2="178.5" stroke="#2b2d30" stroke-width="1.2"/>
<circle cx="597.8" cy="178.5" r="1.9" fill="#2b2d30"/>
<text x="584.4" y="174.9" font-size="6.4" font-weight="700" text-anchor="start" fill="#2b2d30" textLength="15.3" lengthAdjust="spacingAndGlyphs">GAIN</text>
<text x="635.1" y="175.1" font-size="7.4" font-weight="400" text-anchor="end" fill="#2b2d30" textLength="21.8" lengthAdjust="spacingAndGlyphs" stroke="#2b2d30" stroke-width="0.22">-8.32 dB</text>
<line x1="641.3" y1="178.5" x2="693.0" y2="178.5" stroke="#2b2d30" stroke-width="1.2"/>
<circle cx="664.4" cy="178.5" r="1.9" fill="#2b2d30"/>
<text x="649.8" y="174.9" font-size="6.4" font-weight="700" text-anchor="start" fill="#2b2d30" textLength="4.8" lengthAdjust="spacingAndGlyphs">Q</text>
<text x="693.0" y="175.1" font-size="7.4" font-weight="400" text-anchor="end" fill="#2b2d30" textLength="11.2" lengthAdjust="spacingAndGlyphs" stroke="#2b2d30" stroke-width="0.22">1.00</text>
<text x="500.8" y="197.8" font-size="16.2" font-weight="700" text-anchor="start" fill="#34363a" textLength="78.6" lengthAdjust="spacingAndGlyphs" stroke="#34363a" stroke-width="0.5" stroke-linejoin="round">FILTER A</text>
<rect x="588.0" y="185.6" width="14.2" height="14.0" rx="2" fill="#f0a335"/>
<path d="M597.17 188.04A5.1 5.1 0 1 1 593.03 188.04" fill="none" stroke="#7a4d10" stroke-width="1" stroke-linecap="round"/>
<line x1="595.1" y1="186.9" x2="595.1" y2="190.7" stroke="#7a4d10" stroke-width="1" stroke-linecap="round"/>
<path d="M512.93 235.72A16.6 16.6 0 1 1 534.27 235.72" fill="none" stroke="#2b2d30" stroke-width="1.6" stroke-linecap="round"/>
<circle cx="537.3" cy="222.0" r="1.5" fill="#2b2d30"/>
<text x="523.6" y="225.6" font-size="7.2" font-weight="400" text-anchor="middle" fill="#2b2d30" textLength="22.6" lengthAdjust="spacingAndGlyphs" stroke="#2b2d30" stroke-width="0.22">+3.09 dB</text>
<text x="523.6" y="245.6" font-size="6.6" font-weight="700" text-anchor="middle" fill="#2b2d30" textLength="15.8" lengthAdjust="spacingAndGlyphs">GAIN</text>
<path d="M549.2 222H565M561.4 218.8L565.2 222L561.4 225.2" fill="none" stroke="#2b2d30" stroke-width="1.2"/>
<rect x="574.8" y="207.1" width="41.5" height="29.8" rx="3" fill="#b3b8bb"/>
<path d="M577.3 222.4C583 221.4 582.6 213 589 212.6" fill="none" stroke="#393b3f" stroke-width="1.5" stroke-linecap="round"/>
<polygon points="592.00,212.20 587.78,215.22 587.11,210.46" fill="#393b3f"/>
<path d="M599.4 212.7C606.4 212.2 606.6 221.8 599.6 221.8H590C582.6 221.8 581.6 230.6 588.6 231" fill="none" stroke="#393b3f" stroke-width="1.5" stroke-linecap="round"/>
<polygon points="592.00,231.20 587.17,233.11 587.68,228.33" fill="#393b3f"/>
<path d="M599.4 231.2C606 230.6 605.4 222.4 611 221.8" fill="none" stroke="#393b3f" stroke-width="1.5" stroke-linecap="round"/>
<polygon points="614.40,221.40 610.18,224.42 609.51,219.66" fill="#393b3f"/>
<text x="595.8" y="216.0" font-size="6.8" font-weight="400" text-anchor="middle" fill="#393b3f" textLength="3.6" lengthAdjust="spacingAndGlyphs" stroke="#393b3f" stroke-width="0.22">A</text>
<text x="595.4" y="234.2" font-size="6.8" font-weight="400" text-anchor="middle" fill="#393b3f" textLength="3.6" lengthAdjust="spacingAndGlyphs" stroke="#393b3f" stroke-width="0.22">B</text>
<text x="595.6" y="245.6" font-size="6.6" font-weight="700" text-anchor="middle" fill="#2b2d30" textLength="29.1" lengthAdjust="spacingAndGlyphs">ROUTING</text>
<line x1="640.5" y1="203.7" x2="648.5" y2="203.7" stroke="#e6706b" stroke-width="0.9"/>
<line x1="644.5" y1="199.7" x2="644.5" y2="207.7" stroke="#e6706b" stroke-width="0.9"/>
<line x1="644.5" y1="211.4" x2="644.5" y2="254.0" stroke="#e6706b" stroke-width="1.2"/>
<line x1="641.2" y1="233.0" x2="647.8" y2="233.0" stroke="#e6706b" stroke-width="1.1"/>
<circle cx="644.5" cy="243.0" r="2.1" fill="#e6706b"/>
<rect x="651.5" y="201.5" width="66.5" height="66.5" rx="5" fill="#8e9497" filter="url(#sh)" opacity="0.55"/>
<rect x="650.5" y="199.5" width="66.5" height="66.1" rx="4" fill="#393c3f"/>
<circle cx="673.5" cy="246.0" r="3.5" fill="none" stroke="#eaa63a" stroke-width="1.6"/>
<line x1="640.0" y1="269.8" x2="648.6" y2="269.8" stroke="#4a4d50" stroke-width="1"/>
<line x1="640.0" y1="272.4" x2="648.6" y2="272.4" stroke="#4a4d50" stroke-width="1"/>
<line x1="640.0" y1="275.0" x2="648.6" y2="275.0" stroke="#4a4d50" stroke-width="1"/>
<line x1="662.7" y1="272.2" x2="704.7" y2="272.2" stroke="#c3a4ee" stroke-width="1.3"/>
<circle cx="677.0" cy="272.2" r="1.8" fill="#c3a4ee"/>
<line x1="683.5" y1="269.5" x2="683.5" y2="274.9" stroke="#c3a4ee" stroke-width="1.1"/>
<line x1="708.9" y1="272.2" x2="716.1" y2="272.2" stroke="#c3a4ee" stroke-width="0.9"/>
<line x1="712.5" y1="268.6" x2="712.5" y2="275.8" stroke="#c3a4ee" stroke-width="0.9"/>
<rect x="517.2" y="257.0" width="13.0" height="13.5" rx="1.5" fill="#c5cbcf"/>
<path d="M519 268V262C519.6 259.4 521 258.6 522 260.2L523.4 263C524.4 262 526.4 261.6 528.6 265.4" fill="none" stroke="#3a3c40" stroke-width="0.8"/>
<text x="523.6" y="269.8" font-size="5" font-weight="400" text-anchor="middle" fill="#3a3c40" textLength="3.2" lengthAdjust="spacingAndGlyphs">A</text>
<rect x="550.2" y="257.0" width="13.4" height="13.5" rx="1.5" fill="#c5cbcf"/>
<text x="556.9" y="266.4" font-size="6.8" font-weight="400" text-anchor="middle" fill="#5a5d60" textLength="11.2" lengthAdjust="spacingAndGlyphs" stroke="#5a5d60" stroke-width="0.22">PRE</text>
<text x="500.8" y="289.6" font-size="16.2" font-weight="700" text-anchor="start" fill="#34363a" textLength="78.6" lengthAdjust="spacingAndGlyphs" stroke="#34363a" stroke-width="0.5" stroke-linejoin="round">FILTER B</text>
<rect x="588.0" y="277.0" width="14.2" height="13.8" rx="2" fill="#f0a335"/>
<path d="M597.17 279.34A5.1 5.1 0 1 1 593.03 279.34" fill="none" stroke="#7a4d10" stroke-width="1" stroke-linecap="round"/>
<line x1="595.1" y1="278.2" x2="595.1" y2="282.0" stroke="#7a4d10" stroke-width="1" stroke-linecap="round"/>
<rect x="609.5" y="277.0" width="13.5" height="13.8" rx="1.5" fill="#c5cbcf"/>
<path d="M611.4 288.4C614 287 616 280.2 617.4 280.2C618.8 280.2 619.4 284 621.4 288.8" fill="none" stroke="#3a3c40" stroke-width="0.8"/>
<text x="613.6" y="286.4" font-size="6" font-weight="400" text-anchor="middle" fill="#3a3c40" textLength="2.6" lengthAdjust="spacingAndGlyphs" stroke="#3a3c40" stroke-width="0.22">2</text>
<path d="M612 281.6L614.2 279.4" fill="none" stroke="#3a3c40" stroke-width="0.7"/>
<path d="M504.13 340.62A16.6 16.6 0 1 1 525.47 340.62" fill="none" stroke="#2b2d30" stroke-width="1.6" stroke-linecap="round"/>
<path d="M504.13 340.62A16.6 16.6 0 0 1 500.42 319.60" fill="none" stroke="#c3a4ee" stroke-width="2.0" stroke-linecap="round"/>
<text x="514.8" y="330.6" font-size="7.6" font-weight="400" text-anchor="middle" fill="#2b2d30" textLength="10.2" lengthAdjust="spacingAndGlyphs" stroke="#2b2d30" stroke-width="0.22">0 %</text>
<text x="514.8" y="350.5" font-size="6.6" font-weight="700" text-anchor="middle" fill="#2b2d30" textLength="41.0" lengthAdjust="spacingAndGlyphs">MOD OSC FM</text>
<circle cx="506.3" cy="338.0" r="1.7" fill="#c3a4ee"/>
<path d="M563.36 341.87A26.2 26.2 0 1 1 597.04 341.87" fill="none" stroke="#2b2d30" stroke-width="1.6" stroke-linecap="round"/>
<line x1="589.2" y1="301.5" x2="586.4" y2="307.9" stroke="#2b2d30" stroke-width="1.8" stroke-linecap="round"/>
<text x="580.2" y="324.7" font-size="8" font-weight="400" text-anchor="middle" fill="#2b2d30" textLength="23.2" lengthAdjust="spacingAndGlyphs" stroke="#2b2d30" stroke-width="0.22">2543 Hz</text>
<text x="580.2" y="350.5" font-size="7" font-weight="700" text-anchor="middle" fill="#2b2d30" textLength="42.0" lengthAdjust="spacingAndGlyphs">FREQUENCY</text>
<path d="M551.6 298.6V296.4a2 2 0 0 1 2 -2H556.0" fill="none" stroke="#e8b465" stroke-width="0.9"/>
<path d="M607.6 298.6V296.4a2 2 0 0 0 -2 -2H603.2" fill="none" stroke="#e8b465" stroke-width="0.9"/>
<path d="M551.6 346.2V348.4a2 2 0 0 0 2 2H556.0" fill="none" stroke="#e8b465" stroke-width="0.9"/>
<path d="M607.6 346.2V348.4a2 2 0 0 1 -2 2H603.2" fill="none" stroke="#e8b465" stroke-width="0.9"/>
<path d="M634.93 340.62A16.6 16.6 0 1 1 656.27 340.62" fill="none" stroke="#2b2d30" stroke-width="1.6" stroke-linecap="round"/>
<path d="M634.93 340.62A16.6 16.6 0 0 1 651.28 312.30" fill="none" stroke="#c3a4ee" stroke-width="2.0" stroke-linecap="round"/>
<text x="645.6" y="330.6" font-size="7.6" font-weight="400" text-anchor="middle" fill="#2b2d30" textLength="10.2" lengthAdjust="spacingAndGlyphs" stroke="#2b2d30" stroke-width="0.22">0 %</text>
<text x="645.6" y="350.5" font-size="6.6" font-weight="700" text-anchor="middle" fill="#2b2d30" textLength="40.3" lengthAdjust="spacingAndGlyphs">RESONANCE</text>
<circle cx="637.1" cy="338.0" r="1.7" fill="#c3a4ee"/>
<path d="M689.93 340.62A16.6 16.6 0 1 1 711.27 340.62" fill="none" stroke="#2b2d30" stroke-width="1.6" stroke-linecap="round"/>
<circle cx="692.0" cy="338.5" r="1.5" fill="#2b2d30"/>
<text x="700.6" y="350.5" font-size="6.6" font-weight="700" text-anchor="middle" fill="#2b2d30" textLength="18.9" lengthAdjust="spacingAndGlyphs">MODE</text>
<path d="M688.4 327H698.4L701.4 321.6C702 320.8 702.8 320.8 703.2 321.8L708.6 335.6" fill="none" stroke="#2b2d30" stroke-width="1"/>
<rect x="747.8" y="79.3" width="194.9" height="89.2" rx="2.5" fill="#cad0d3" stroke="#aab0b3" stroke-width="0.8"/>
<path d="M751 168.2L769 84.6C775 104 795 117.6 819.7 122.8C826 140 842 157 860.7 163.6L860.7 168.2Z" fill="#b0b4b7"/>
<path d="M751 168.2L769 84.6C775 104 795 117.6 819.7 122.8C826 140 842 157 860.7 163.6" fill="none" stroke="#33353a" stroke-width="1.4"/>
<circle cx="769.0" cy="84.3" r="3.1" fill="#c9b48e" stroke="#e9a440" stroke-width="1.2" fill-opacity="0.5"/>
<circle cx="769.0" cy="84.3" r="1.3" fill="#4a4238"/>
<circle cx="819.7" cy="122.8" r="3.1" fill="#c9b48e" stroke="#e9a440" stroke-width="1.2" fill-opacity="0.5"/>
<circle cx="819.7" cy="122.8" r="1.3" fill="#4a4238"/>
<circle cx="860.7" cy="163.6" r="3.1" fill="#c9b48e" stroke="#e9a440" stroke-width="1.2" fill-opacity="0.5"/>
<circle cx="860.7" cy="163.6" r="1.3" fill="#4a4238"/>
<path d="M960.66 112.16A16.4 16.4 0 1 1 981.74 112.16" fill="none" stroke="#2b2d30" stroke-width="1.6" stroke-linecap="round"/>
<circle cx="971.2" cy="86.1" r="1.5" fill="#2b2d30"/>
<text x="971.2" y="102.3" font-size="7.6" font-weight="400" text-anchor="middle" fill="#2b2d30" textLength="10.2" lengthAdjust="spacingAndGlyphs" stroke="#2b2d30" stroke-width="0.22">0 %</text>
<text x="971.2" y="122.6" font-size="6.6" font-weight="700" text-anchor="middle" fill="#2b2d30" textLength="28.0" lengthAdjust="spacingAndGlyphs">A CURVE</text>
<path d="M960.66 157.76A16.4 16.4 0 1 1 981.74 157.76" fill="none" stroke="#2b2d30" stroke-width="1.6" stroke-linecap="round"/>
<circle cx="958.5" cy="140.6" r="1.5" fill="#2b2d30"/>
<text x="971.2" y="147.9" font-size="7.6" font-weight="400" text-anchor="middle" fill="#2b2d30" textLength="15.5" lengthAdjust="spacingAndGlyphs" stroke="#2b2d30" stroke-width="0.22">-48 %</text>
<text x="971.2" y="168.2" font-size="6.6" font-weight="700" text-anchor="middle" fill="#2b2d30" textLength="32.8" lengthAdjust="spacingAndGlyphs">DR CURVE</text>
<text x="751.0" y="183.2" font-size="6.4" font-weight="700" text-anchor="start" fill="#2b2d30" textLength="11.4" lengthAdjust="spacingAndGlyphs">ATT</text>
<text x="794.8" y="183.2" font-size="7.9" font-weight="400" text-anchor="end" fill="#2b2d30" textLength="20.2" lengthAdjust="spacingAndGlyphs" stroke="#2b2d30" stroke-width="0.22">941 ms</text>
<text x="800.3" y="183.2" font-size="6.4" font-weight="700" text-anchor="start" fill="#2b2d30" textLength="12.9" lengthAdjust="spacingAndGlyphs">DEC</text>
<text x="843.0" y="183.2" font-size="7.9" font-weight="400" text-anchor="end" fill="#2b2d30" textLength="27.1" lengthAdjust="spacingAndGlyphs" stroke="#2b2d30" stroke-width="0.22">12421 ms</text>
<text x="848.4" y="183.2" font-size="6.4" font-weight="700" text-anchor="start" fill="#2b2d30" textLength="12.6" lengthAdjust="spacingAndGlyphs">SUS</text>
<text x="892.2" y="183.2" font-size="7.9" font-weight="400" text-anchor="end" fill="#2b2d30" textLength="23.3" lengthAdjust="spacingAndGlyphs" stroke="#2b2d30" stroke-width="0.22">-5.88 dB</text>
<text x="897.4" y="183.2" font-size="6.4" font-weight="700" text-anchor="start" fill="#2b2d30" textLength="12.2" lengthAdjust="spacingAndGlyphs">REL</text>
<text x="940.6" y="183.2" font-size="7.9" font-weight="400" text-anchor="end" fill="#2b2d30" textLength="23.6" lengthAdjust="spacingAndGlyphs" stroke="#2b2d30" stroke-width="0.22">6265 ms</text>
<line x1="749.0" y1="194.5" x2="790.7" y2="194.5" stroke="#2b2d30" stroke-width="1.3"/>
<circle cx="790.6" cy="194.5" r="1.9" fill="#2b2d30"/>
<text x="748.6" y="202.9" font-size="6.2" font-weight="700" text-anchor="start" fill="#2b2d30" textLength="19.1" lengthAdjust="spacingAndGlyphs">DEPTH</text>
<text x="794.8" y="203.1" font-size="7.4" font-weight="400" text-anchor="end" fill="#2b2d30" textLength="16.4" lengthAdjust="spacingAndGlyphs" stroke="#2b2d30" stroke-width="0.22">100 %</text>
<rect x="834.7" y="191.0" width="13.3" height="13.0" rx="1.5" fill="#c1c7ca"/>
<path d="M845.02 195.45A4.3 4.3 0 1 1 840.55 193.37" fill="none" stroke="#3a3c40" stroke-width="0.9"/>
<path d="M843.4 191.8L845.4 194.6L842 195.2" fill="none" stroke="#3a3c40" stroke-width="0.9"/>
<rect x="858.5" y="191.0" width="13.5" height="13.0" rx="1.5" fill="#c1c7ca"/>
<path d="M863.6 193.0H866.9L869.0 202.0H861.5Z" fill="none" stroke="#3a3c40" stroke-width="0.9" stroke-linejoin="round"/>
<line x1="862.2" y1="199.4" x2="868.2" y2="199.4" stroke="#3a3c40" stroke-width="0.8"/>
<line x1="865.2" y1="199.4" x2="866.9" y2="194.6" stroke="#3a3c40" stroke-width="0.8"/>
<text x="890.0" y="203.9" font-size="16.2" font-weight="700" text-anchor="start" fill="#34363a" textLength="37.0" lengthAdjust="spacingAndGlyphs" stroke="#34363a" stroke-width="0.5" stroke-linejoin="round">ENV</text>
<text x="930.8" y="203.9" font-size="16.2" font-weight="700" text-anchor="start" fill="#f0a335" textLength="15.4" lengthAdjust="spacingAndGlyphs" stroke="#f0a335" stroke-width="0.5" stroke-linejoin="round">A</text>
<text x="946.9" y="203.9" font-size="16.2" font-weight="400" text-anchor="start" fill="#34363a" textLength="7.2" lengthAdjust="spacingAndGlyphs" stroke="#34363a" stroke-width="0.4">/</text>
<text x="954.7" y="203.9" font-size="16.2" font-weight="700" text-anchor="start" fill="#9c9fa2" textLength="13.7" lengthAdjust="spacingAndGlyphs" stroke="#9c9fa2" stroke-width="0.5" stroke-linejoin="round">B</text>
<text x="968.8" y="203.9" font-size="16.2" font-weight="400" text-anchor="start" fill="#34363a" textLength="7.2" lengthAdjust="spacingAndGlyphs" stroke="#34363a" stroke-width="0.4">/</text>
<text x="976.9" y="203.9" font-size="16.2" font-weight="700" text-anchor="start" fill="#9c9fa2" textLength="14.2" lengthAdjust="spacingAndGlyphs" stroke="#9c9fa2" stroke-width="0.5" stroke-linejoin="round">C</text>
<rect x="793.4" y="220.9" width="103.4" height="11.4" rx="2.5" fill="#c1c7ca"/>
<rect x="802.0" y="220.9" width="73.3" height="11.4" rx="0" fill="#b7bdc0"/>
<polygon points="801.1,223.1 801.1,230.1 795.7,226.6" fill="#2b2d30"/>
<polygon points="875.8,223.1 875.8,230.1 881.2,226.6" fill="#2b2d30"/>
<text x="839.6" y="229.0" font-size="6.8" font-weight="700" text-anchor="middle" fill="#2b2d30" textLength="22.7" lengthAdjust="spacingAndGlyphs">Default</text>
<rect x="884.5" y="222.8" width="10.2" height="8.4" rx="1.2" fill="none" stroke="#2b2d30" stroke-width="0.9"/>
<path d="M889.6 224.0V229.6M887.0 227.0L889.6 229.8L892.2 227.0" fill="none" stroke="#2b2d30" stroke-width="0.9"/>
<rect x="748.0" y="245.2" width="194.7" height="91.1" rx="2.5" fill="#cad0d3" stroke="#aab0b3" stroke-width="0.8"/>
<line x1="760.2" y1="245.6" x2="760.2" y2="336.0" stroke="#b3b9bc" stroke-width="0.7"/>
<line x1="772.3" y1="245.6" x2="772.3" y2="336.0" stroke="#b3b9bc" stroke-width="0.7"/>
<line x1="784.5" y1="245.6" x2="784.5" y2="336.0" stroke="#b3b9bc" stroke-width="0.7"/>
<line x1="796.7" y1="245.6" x2="796.7" y2="336.0" stroke="#b3b9bc" stroke-width="0.7"/>
<line x1="808.8" y1="245.6" x2="808.8" y2="336.0" stroke="#b3b9bc" stroke-width="0.7"/>
<line x1="821.0" y1="245.6" x2="821.0" y2="336.0" stroke="#b3b9bc" stroke-width="0.7"/>
<line x1="833.2" y1="245.6" x2="833.2" y2="336.0" stroke="#b3b9bc" stroke-width="0.7"/>
<line x1="845.4" y1="245.6" x2="845.4" y2="336.0" stroke="#b3b9bc" stroke-width="0.7"/>
<line x1="857.5" y1="245.6" x2="857.5" y2="336.0" stroke="#b3b9bc" stroke-width="0.7"/>
<line x1="869.7" y1="245.6" x2="869.7" y2="336.0" stroke="#b3b9bc" stroke-width="0.7"/>
<line x1="881.9" y1="245.6" x2="881.9" y2="336.0" stroke="#b3b9bc" stroke-width="0.7"/>
<line x1="894.0" y1="245.6" x2="894.0" y2="336.0" stroke="#b3b9bc" stroke-width="0.7"/>
<line x1="906.2" y1="245.6" x2="906.2" y2="336.0" stroke="#b3b9bc" stroke-width="0.7"/>
<line x1="918.4" y1="245.6" x2="918.4" y2="336.0" stroke="#b3b9bc" stroke-width="0.7"/>
<line x1="930.5" y1="245.6" x2="930.5" y2="336.0" stroke="#b3b9bc" stroke-width="0.7"/>
<path d="M749 336L845.3 246.2L941.8 336Z" fill="#9da1a4" opacity="0.62"/>
<path d="M749 336L845.3 246.2L941.8 336" fill="none" stroke="#33353a" stroke-width="1.3"/>
<circle cx="796.4" cy="290.6" r="2.6" fill="#2e3033"/>
<circle cx="893.8" cy="290.6" r="2.6" fill="#2e3033"/>
<rect x="843.6" y="245.2" width="3.4" height="2.0" rx="0" fill="#f0a335"/>
<circle cx="749.2" cy="335.6" r="1.1" fill="#f0a335"/>
<circle cx="941.6" cy="335.6" r="1.1" fill="#f0a335"/>
<path d="M960.66 277.16A16.4 16.4 0 1 1 981.74 277.16" fill="none" stroke="#2b2d30" stroke-width="1.6" stroke-linecap="round"/>
<circle cx="962.7" cy="275.1" r="1.5" fill="#2b2d30"/>
<text x="971.2" y="267.3" font-size="7.6" font-weight="400" text-anchor="middle" fill="#2b2d30" textLength="10.2" lengthAdjust="spacingAndGlyphs" stroke="#2b2d30" stroke-width="0.22">0 %</text>
<text x="971.2" y="286.6" font-size="6.6" font-weight="700" text-anchor="middle" fill="#2b2d30" textLength="21.7" lengthAdjust="spacingAndGlyphs">PHASE</text>
<path d="M960.66 322.86A16.4 16.4 0 1 1 981.74 322.86" fill="none" stroke="#2b2d30" stroke-width="1.6" stroke-linecap="round"/>
<circle cx="980.6" cy="300.6" r="1.5" fill="#2b2d30"/>
<text x="971.2" y="313.0" font-size="7.6" font-weight="400" text-anchor="middle" fill="#2b2d30" textLength="20.4" lengthAdjust="spacingAndGlyphs" stroke="#2b2d30" stroke-width="0.22">3.84 Hz</text>
<text x="971.2" y="332.3" font-size="6.6" font-weight="700" text-anchor="middle" fill="#2b2d30" textLength="16.7" lengthAdjust="spacingAndGlyphs">RATE</text>
<line x1="749.0" y1="347.7" x2="790.7" y2="347.7" stroke="#2b2d30" stroke-width="1.3"/>
<circle cx="790.6" cy="347.7" r="1.9" fill="#2b2d30"/>
<text x="748.6" y="356.1" font-size="6.2" font-weight="700" text-anchor="start" fill="#2b2d30" textLength="19.1" lengthAdjust="spacingAndGlyphs">DEPTH</text>
<text x="794.8" y="356.3" font-size="7.4" font-weight="400" text-anchor="end" fill="#2b2d30" textLength="16.4" lengthAdjust="spacingAndGlyphs" stroke="#2b2d30" stroke-width="0.22">100 %</text>
<rect x="811.2" y="343.9" width="12.6" height="13.4" rx="1.5" fill="#c1c7ca"/>
<path d="M815.9 345.9H819.1L821.3 355.3H813.7Z" fill="none" stroke="#3a3c40" stroke-width="0.9" stroke-linejoin="round"/>
<line x1="814.5" y1="352.7" x2="820.5" y2="352.7" stroke="#3a3c40" stroke-width="0.8"/>
<line x1="817.5" y1="352.7" x2="819.1" y2="347.5" stroke="#3a3c40" stroke-width="0.8"/>
<rect x="836.4" y="345.4" width="10.0" height="10.4" rx="1.2" fill="none" stroke="#3a3c40" stroke-width="1"/>
<line x1="839.7" y1="345.4" x2="839.7" y2="355.8" stroke="#3a3c40" stroke-width="0.8"/>
<rect x="838.4" y="345.4" width="2.6" height="6.0" rx="0" fill="#3a3c40"/>
<line x1="843.1" y1="345.4" x2="843.1" y2="355.8" stroke="#3a3c40" stroke-width="0.8"/>
<rect x="841.8" y="345.4" width="2.6" height="6.0" rx="0" fill="#3a3c40"/>
<rect x="858.5" y="343.9" width="13.5" height="13.4" rx="1.5" fill="#c1c7ca"/>
<rect x="858.5" y="350.6" width="13.5" height="6.7" rx="1.5" fill="#b3b9bc"/>
<path d="M860 350.4C861.6 346.4 863 346 864.6 348.4C866.4 351 868 352.6 870.4 347.6" fill="none" stroke="#3a3c40" stroke-width="0.8"/>
<text x="890.8" y="357.2" font-size="16.2" font-weight="700" text-anchor="start" fill="#34363a" textLength="36.0" lengthAdjust="spacingAndGlyphs" stroke="#34363a" stroke-width="0.5" stroke-linejoin="round">LFO</text>
<text x="930.8" y="357.2" font-size="16.2" font-weight="700" text-anchor="start" fill="#f0a335" textLength="15.4" lengthAdjust="spacingAndGlyphs" stroke="#f0a335" stroke-width="0.5" stroke-linejoin="round">A</text>
<text x="946.9" y="357.2" font-size="16.2" font-weight="400" text-anchor="start" fill="#34363a" textLength="7.2" lengthAdjust="spacingAndGlyphs" stroke="#34363a" stroke-width="0.4">/</text>
<text x="954.7" y="357.2" font-size="16.2" font-weight="700" text-anchor="start" fill="#9c9fa2" textLength="13.7" lengthAdjust="spacingAndGlyphs" stroke="#9c9fa2" stroke-width="0.5" stroke-linejoin="round">B</text>
<text x="968.8" y="357.2" font-size="16.2" font-weight="400" text-anchor="start" fill="#34363a" textLength="7.2" lengthAdjust="spacingAndGlyphs" stroke="#34363a" stroke-width="0.4">/</text>
<text x="976.9" y="357.2" font-size="16.2" font-weight="700" text-anchor="start" fill="#9c9fa2" textLength="14.2" lengthAdjust="spacingAndGlyphs" stroke="#9c9fa2" stroke-width="0.5" stroke-linejoin="round">C</text>
<path d="M36 410C38 418 44 418 48 402C52 386 58 386 60.4 394" fill="none" stroke="#b4c0cf" stroke-width="0.7"/>
<path d="M35.2 401.8V417H53.6V386.6H72.4V402" fill="none" stroke="#6584af" stroke-width="1.3"/>
<path d="M88 402C92 424 100 424 105.6 402C110 384 118 382 123 396" fill="none" stroke="#b4c0cf" stroke-width="0.7"/>
<path d="M87.6 402.4H105.2V408.6H122V391H124.2" fill="none" stroke="#6584af" stroke-width="1.3"/>
<path d="M139 401.6V417H158V386.4H175.6V402" fill="none" stroke="#b4c0cf" stroke-width="0.7"/>
<path d="M138.6 401.4L157.4 416.4L176.2 401.4" fill="none" stroke="#6584af" stroke-width="1.3"/>
<text x="54.1" y="429.8" font-size="6.2" font-weight="700" text-anchor="middle" fill="#6584af" textLength="29.8" lengthAdjust="spacingAndGlyphs">BITCRUSH</text>
<text x="105.6" y="429.8" font-size="6.2" font-weight="700" text-anchor="middle" fill="#6584af" textLength="29.0" lengthAdjust="spacingAndGlyphs">S&amp;H RATE</text>
<text x="157.4" y="429.8" font-size="6.2" font-weight="700" text-anchor="middle" fill="#6584af" textLength="33.5" lengthAdjust="spacingAndGlyphs">SLEW RATE</text>
<text x="36.4" y="454.4" font-size="16.2" font-weight="700" text-anchor="start" fill="#6584af" textLength="99.2" lengthAdjust="spacingAndGlyphs" stroke="#6584af" stroke-width="0.5" stroke-linejoin="round">NOISE LFO</text>
<rect x="144.0" y="441.3" width="13.0" height="13.1" rx="1.5" fill="#c3cad0"/>
<path d="M148.9 443.3H152.1L154.3 452.4H146.7Z" fill="none" stroke="#6584af" stroke-width="0.9" stroke-linejoin="round"/>
<line x1="147.5" y1="449.8" x2="153.5" y2="449.8" stroke="#6584af" stroke-width="0.8"/>
<line x1="150.5" y1="449.8" x2="152.1" y2="444.9" stroke="#6584af" stroke-width="0.8"/>
<rect x="167.4" y="443.0" width="10.0" height="10.0" rx="1.2" fill="none" stroke="#6584af" stroke-width="1"/>
<line x1="170.7" y1="443.0" x2="170.7" y2="453.0" stroke="#6584af" stroke-width="0.8"/>
<rect x="169.4" y="443.0" width="2.6" height="5.8" rx="0" fill="#6584af"/>
<line x1="174.1" y1="443.0" x2="174.1" y2="453.0" stroke="#6584af" stroke-width="0.8"/>
<rect x="172.8" y="443.0" width="2.6" height="5.8" rx="0" fill="#6584af"/>
<rect x="211.9" y="379.0" width="27.0" height="47.6" rx="1.8" fill="#c1c7ca"/>
<line x1="211.9" y1="391.4" x2="238.9" y2="393.4" stroke="#7b95b6" stroke-width="0.7"/>
<line x1="211.9" y1="403.0" x2="238.9" y2="403.0" stroke="#eda53d" stroke-width="1.5"/>
<rect x="211.9" y="379.0" width="27.0" height="47.6" rx="1.8" fill="none" stroke="#4c4f53" stroke-width="0.9"/>
<text x="225.4" y="435.3" font-size="6.6" font-weight="700" text-anchor="middle" fill="#2b2d30" textLength="19.9" lengthAdjust="spacingAndGlyphs">ENV A</text>
<rect x="253.7" y="379.0" width="27.0" height="47.6" rx="1.8" fill="#c1c7ca"/>
<line x1="253.7" y1="403.0" x2="280.7" y2="403.0" stroke="#eda53d" stroke-width="1.5"/>
<rect x="253.7" y="379.0" width="27.0" height="47.6" rx="1.8" fill="none" stroke="#4c4f53" stroke-width="0.9"/>
<text x="267.2" y="435.3" font-size="6.6" font-weight="700" text-anchor="middle" fill="#2b2d30" textLength="20.2" lengthAdjust="spacingAndGlyphs">ENV B</text>
<rect x="295.5" y="379.0" width="27.0" height="47.6" rx="1.8" fill="#c1c7ca"/>
<line x1="295.5" y1="403.0" x2="322.5" y2="403.0" stroke="#eda53d" stroke-width="1.5"/>
<rect x="295.5" y="379.0" width="27.0" height="47.6" rx="1.8" fill="none" stroke="#4c4f53" stroke-width="0.9"/>
<text x="309.0" y="435.3" font-size="6.6" font-weight="700" text-anchor="middle" fill="#2b2d30" textLength="20.2" lengthAdjust="spacingAndGlyphs">ENV C</text>
<rect x="337.2" y="379.0" width="27.0" height="47.6" rx="1.8" fill="#c1c7ca"/>
<path d="M337.2 398L342.8 380L351.2 402.4L361.2 380L364.2 386" fill="none" stroke="#7b95b6" stroke-width="0.8"/>
<line x1="337.2" y1="403.0" x2="364.2" y2="403.0" stroke="#eda53d" stroke-width="1.5"/>
<rect x="337.2" y="379.0" width="27.0" height="47.6" rx="1.8" fill="none" stroke="#4c4f53" stroke-width="0.9"/>
<text x="350.7" y="435.3" font-size="6.6" font-weight="700" text-anchor="middle" fill="#2b2d30" textLength="19.6" lengthAdjust="spacingAndGlyphs">LFO A</text>
<rect x="379.0" y="379.0" width="27.0" height="47.6" rx="1.8" fill="#c1c7ca"/>
<rect x="379.0" y="379.0" width="27.0" height="24.0" rx="1.8" fill="#6f91bd"/>
<path d="M380.0 394L383.0 388.6L386.4 393.6L389.6 388.6L393.0 393.6L396.4 388.6L399.8 393.6L403.0 388.6L405.0 392" fill="none" stroke="#a9bcd6" stroke-width="0.8"/>
<line x1="379.0" y1="403.0" x2="406.0" y2="403.0" stroke="#eda53d" stroke-width="1.5"/>
<rect x="379.0" y="379.0" width="27.0" height="47.6" rx="1.8" fill="none" stroke="#4c4f53" stroke-width="0.9"/>
<text x="392.5" y="435.3" font-size="6.6" font-weight="700" text-anchor="middle" fill="#2b2d30" textLength="19.8" lengthAdjust="spacingAndGlyphs">LFO B</text>
<rect x="420.8" y="379.0" width="27.0" height="47.6" rx="1.8" fill="#c1c7ca"/>
<line x1="420.8" y1="380.4" x2="447.8" y2="399.0" stroke="#7b95b6" stroke-width="0.8"/>
<line x1="420.8" y1="403.0" x2="447.8" y2="403.0" stroke="#eda53d" stroke-width="1.5"/>
<rect x="420.8" y="379.0" width="27.0" height="47.6" rx="1.8" fill="none" stroke="#4c4f53" stroke-width="0.9"/>
<text x="434.3" y="435.3" font-size="6.6" font-weight="700" text-anchor="middle" fill="#2b2d30" textLength="19.8" lengthAdjust="spacingAndGlyphs">LFO C</text>
<rect x="462.6" y="379.0" width="27.0" height="47.6" rx="1.8" fill="#c1c7ca"/>
<line x1="462.6" y1="403.0" x2="489.6" y2="403.0" stroke="#eda53d" stroke-width="1.5"/>
<rect x="462.6" y="379.0" width="27.0" height="47.6" rx="1.8" fill="none" stroke="#4c4f53" stroke-width="0.9"/>
<text x="476.1" y="435.3" font-size="6.6" font-weight="700" text-anchor="middle" fill="#2b2d30" textLength="20.5" lengthAdjust="spacingAndGlyphs">NOISE</text>
<rect x="504.4" y="379.0" width="27.0" height="47.6" rx="1.8" fill="#c1c7ca"/>
<rect x="504.4" y="391.4" width="27.0" height="11.6" rx="0" fill="#b1b7ba"/>
<line x1="504.4" y1="403.0" x2="531.4" y2="403.0" stroke="#5a5d60" stroke-width="0.7"/>
<line x1="504.4" y1="391.4" x2="531.4" y2="391.4" stroke="#eda53d" stroke-width="1.5"/>
<rect x="504.4" y="379.0" width="27.0" height="47.6" rx="1.8" fill="none" stroke="#4c4f53" stroke-width="0.9"/>
<text x="517.9" y="435.3" font-size="6.6" font-weight="700" text-anchor="middle" fill="#2b2d30" textLength="11.7" lengthAdjust="spacingAndGlyphs">MW</text>
<rect x="546.1" y="379.0" width="27.0" height="47.6" rx="1.8" fill="#c1c7ca"/>
<line x1="546.1" y1="400.0" x2="573.1" y2="400.0" stroke="#7b95b6" stroke-width="0.8"/>
<line x1="546.1" y1="403.0" x2="573.1" y2="403.0" stroke="#eda53d" stroke-width="1.5"/>
<rect x="546.1" y="379.0" width="27.0" height="47.6" rx="1.8" fill="none" stroke="#4c4f53" stroke-width="0.9"/>
<text x="559.6" y="435.3" font-size="6.6" font-weight="700" text-anchor="middle" fill="#2b2d30" textLength="18.0" lengthAdjust="spacingAndGlyphs">VELO</text>
<rect x="587.9" y="379.0" width="27.0" height="47.6" rx="1.8" fill="#c1c7ca"/>
<rect x="587.9" y="394.8" width="27.0" height="8.2" rx="0" fill="#b1b7ba"/>
<line x1="587.9" y1="403.0" x2="614.9" y2="403.0" stroke="#5a5d60" stroke-width="0.7"/>
<line x1="587.9" y1="394.8" x2="614.9" y2="394.8" stroke="#eda53d" stroke-width="1.5"/>
<rect x="587.9" y="379.0" width="27.0" height="47.6" rx="1.8" fill="none" stroke="#4c4f53" stroke-width="0.9"/>
<text x="601.4" y="435.3" font-size="6.6" font-weight="700" text-anchor="middle" fill="#2b2d30" textLength="12.8" lengthAdjust="spacingAndGlyphs">AFT</text>
<rect x="629.7" y="379.0" width="27.0" height="47.6" rx="1.8" fill="#c1c7ca"/>
<line x1="629.7" y1="407.3" x2="656.7" y2="407.3" stroke="#7b95b6" stroke-width="0.8"/>
<line x1="629.7" y1="403.0" x2="656.7" y2="403.0" stroke="#eda53d" stroke-width="1.5"/>
<rect x="629.7" y="379.0" width="27.0" height="47.6" rx="1.8" fill="none" stroke="#4c4f53" stroke-width="0.9"/>
<text x="643.2" y="435.3" font-size="6.6" font-weight="700" text-anchor="middle" fill="#2b2d30" textLength="13.6" lengthAdjust="spacingAndGlyphs">KEY</text>
<text x="206.9" y="452.0" font-size="6.2" font-weight="700" text-anchor="start" fill="#2b2d30" textLength="66.0" lengthAdjust="spacingAndGlyphs">FILTER B FREQUENCY</text>
<rect x="671.8" y="379.0" width="12.1" height="48.0" rx="4" fill="#b8bec1"/>
<polygon points="677.49,399.42 678.31,399.42 678.67,400.30 679.26,400.54 680.14,400.18 680.72,400.76 680.36,401.64 680.60,402.23 681.48,402.59 681.48,403.41 680.60,403.77 680.36,404.36 680.72,405.24 680.14,405.82 679.26,405.46 678.67,405.70 678.31,406.58 677.49,406.58 677.13,405.70 676.54,405.46 675.66,405.82 675.08,405.24 675.44,404.36 675.20,403.77 674.32,403.41 674.32,402.59 675.20,402.23 675.44,401.64 675.08,400.76 675.66,400.18 676.54,400.54 677.13,400.30" fill="none" stroke="#4a4d50" stroke-width="0.7" stroke-linejoin="round"/>
<circle cx="677.9" cy="403.0" r="1.296" fill="none" stroke="#4a4d50" stroke-width="0.7"/>
<rect x="532.4" y="440.0" width="151.5" height="17.6" rx="3" fill="#b8bec1"/>
<polygon points="538.8,447.6 543.2,447.6 541.0,450.8" fill="#33353a"/>
<text x="550.1" y="455.2" font-size="16.2" font-weight="700" text-anchor="start" fill="#36383c" textLength="131.6" lengthAdjust="spacingAndGlyphs" stroke="#36383c" stroke-width="0.5" stroke-linejoin="round">MODULATION</text>
<text transform="translate(726.5 458.2) rotate(-90)" font-size="31.4" font-weight="700" fill="#d2d8dc" stroke="#d2d8dc" stroke-width="6.6" stroke-linejoin="round"><tspan x="-1.6" textLength="24.2" lengthAdjust="spacingAndGlyphs">M</tspan><tspan x="29.1" textLength="20.6" lengthAdjust="spacingAndGlyphs">A</tspan><tspan x="57.2" textLength="23" lengthAdjust="spacingAndGlyphs">P</tspan></text>
<rect x="743.1" y="385.4" width="48.4" height="11.2" rx="2.5" fill="#b7bdc0"/>
<polygon points="749.9,388.3 749.9,393.7 745.7,391.0" fill="#2b2d30"/>
<polygon points="784.8,388.3 784.8,393.7 789.0,391.0" fill="#2b2d30"/>
<text x="767.3" y="393.3" font-size="6.4" font-weight="700" text-anchor="middle" fill="#2b2d30" textLength="16.1" lengthAdjust="spacingAndGlyphs">POLY</text>
<rect x="749.1" y="403.8" width="36.4" height="11.0" rx="2.5" fill="#b7bdc0"/>
<polygon points="756.1,406.6 756.1,412.0 751.9,409.3" fill="#2b2d30"/>
<polygon points="778.8,406.6 778.8,412.0 783.0,409.3" fill="#2b2d30"/>
<text x="767.3" y="411.6" font-size="6.4" font-weight="700" text-anchor="middle" fill="#2b2d30" textLength="6.8" lengthAdjust="spacingAndGlyphs">12</text>
<text x="767.5" y="423.8" font-size="6.4" font-weight="700" text-anchor="middle" fill="#2b2d30" textLength="23.1" lengthAdjust="spacingAndGlyphs">VOICES</text>
<path d="M801.4 397.4C802.59 404.6 803.52 404.6 804.71 400.2C805.90 395.8 806.83 395.8 808.02 397.4C809.21 404.6 810.14 404.6 811.33 400.2C812.52 395.8 813.45 395.8 814.64 397.4C815.83 404.6 816.76 404.6 817.95 400.2C819.14 395.8 820.07 395.8 821.26 397.4C822.45 404.6 823.38 404.6 824.57 400.2C825.76 395.8 826.69 395.8 827.88 397.4C829.07 404.6 830.00 404.6 831.19 400.2C832.38 395.8 833.31 395.8 834.50 399.4" fill="none" stroke="#2b2d30" stroke-width="1.5" stroke-linecap="round"/>
<text x="817.5" y="423.8" font-size="6.4" font-weight="700" text-anchor="middle" fill="#2b2d30" textLength="25.1" lengthAdjust="spacingAndGlyphs">DETUNE</text>
<path d="M866.5 400.2L878.84 389.09A16.6 16.6 0 0 1 878.84 411.31Z" fill="#a9adb0" opacity="1"/>
<path d="M866.5 400.2L854.16 411.31A16.6 16.6 0 0 1 854.16 389.09Z" fill="#a9adb0" opacity="1"/>
<path d="M866.5 400.2L871.90 393.77A8.4 8.4 0 0 1 871.90 406.63Z" fill="#3a3c40" opacity="1"/>
<path d="M866.5 400.2L861.10 406.63A8.4 8.4 0 0 1 861.10 393.77Z" fill="#3a3c40" opacity="1"/>
<circle cx="866.5" cy="400.2" r="3.4" fill="#d2d8dc"/>
<circle cx="866.5" cy="400.2" r="1.6" fill="#2b2d30"/>
<text x="866.5" y="423.8" font-size="6.4" font-weight="700" text-anchor="middle" fill="#2b2d30" textLength="39.6" lengthAdjust="spacingAndGlyphs">PAN SPREAD</text>
<path d="M899.4 413.4V388H903" fill="none" stroke="#b3b9bc" stroke-width="0.8"/>
<path d="M898.4 413.6H901.4C903.6 413.6 904 410 904.4 406L906 390.6C906.4 387.2 907.4 386.6 910 386.6H932.4" fill="none" stroke="#2b2d30" stroke-width="1.3"/>
<text x="915.1" y="423.8" font-size="6.4" font-weight="700" text-anchor="middle" fill="#2b2d30" textLength="20.9" lengthAdjust="spacingAndGlyphs">PORTA</text>
<path d="M954.38 385.65A20.5 20.5 0 0 0 946.55 403.23" fill="none" stroke="#b5bbbf" stroke-width="1.7"/>
<path d="M946.55 403.23A20.5 20.5 0 0 0 953.82 417.50" fill="none" stroke="#90d371" stroke-width="1.9"/>
<path d="M979.62 385.65A20.5 20.5 0 0 1 987.45 403.23" fill="none" stroke="#b5bbbf" stroke-width="1.7"/>
<path d="M987.45 403.23A20.5 20.5 0 0 1 980.18 417.50" fill="none" stroke="#90d371" stroke-width="1.9"/>
<path d="M956.27 414.59A16.7 16.7 0 1 1 977.73 414.59" fill="none" stroke="#2b2d30" stroke-width="1.6" stroke-linecap="round"/>
<circle cx="953.2" cy="401.8" r="1.5" fill="#2b2d30"/>
<text x="967.0" y="404.5" font-size="7.6" font-weight="400" text-anchor="middle" fill="#2b2d30" textLength="25.7" lengthAdjust="spacingAndGlyphs" stroke="#2b2d30" stroke-width="0.22">-15.18 dB</text>
<text x="967.0" y="423.8" font-size="6.4" font-weight="700" text-anchor="middle" fill="#2b2d30" textLength="26.1" lengthAdjust="spacingAndGlyphs">VOLUME</text>
<polygon points="815.2,436.4 819.8,436.4 817.5,432.8" fill="#2b2d30"/>
<polygon points="865.7,436.4 870.3,436.4 868.0,432.8" fill="#2b2d30"/>
<line x1="745.0" y1="444.2" x2="790.2" y2="444.2" stroke="#2b2d30" stroke-width="1.3"/>
<circle cx="746.4" cy="444.2" r="1.9" fill="#2b2d30"/>
<text x="767.5" y="453.4" font-size="7.4" font-weight="400" text-anchor="middle" fill="#2b2d30" textLength="7.7" lengthAdjust="spacingAndGlyphs" stroke="#2b2d30" stroke-width="0.22">2st</text>
<text x="767.5" y="460.6" font-size="6.4" font-weight="700" text-anchor="middle" fill="#2b2d30" textLength="32.3" lengthAdjust="spacingAndGlyphs">PB RANGE</text>
<rect x="799.7" y="442.9" width="36.4" height="12.1" rx="2.5" fill="#797d80"/>
<text x="817.9" y="451.4" font-size="6.4" font-weight="700" text-anchor="middle" fill="#2e3033" textLength="23.8" lengthAdjust="spacingAndGlyphs">UNISON</text>
<rect x="842.1" y="442.9" width="51.4" height="12.1" rx="2.5" fill="#b7bdc0"/>
<polygon points="848.7,446.2 848.7,451.6 844.5,448.9" fill="#2b2d30"/>
<polygon points="886.9,446.2 886.9,451.6 891.1,448.9" fill="#2b2d30"/>
<text x="867.8" y="451.3" font-size="6.4" font-weight="700" text-anchor="middle" fill="#2b2d30" textLength="27.5" lengthAdjust="spacingAndGlyphs">RANDOM</text>
<rect x="900.1" y="442.9" width="30.1" height="12.1" rx="2.5" fill="#b7bdc0"/>
<text x="915.1" y="451.4" font-size="6.4" font-weight="700" text-anchor="middle" fill="#2b2d30" textLength="17.3" lengthAdjust="spacingAndGlyphs">HOLD</text>
<circle cx="943.3" cy="447.0" r="4" fill="#b9bfc2"/>
<circle cx="955.0" cy="447.0" r="4" fill="#b9bfc2"/>
<circle cx="967.4" cy="447.0" r="3.6" fill="#3a3c40" stroke="#f0a335" stroke-width="1.5"/>
<circle cx="979.4" cy="447.0" r="4" fill="#b9bfc2"/>
<circle cx="991.7" cy="447.0" r="4" fill="#b9bfc2"/>
<text x="967.4" y="460.0" font-size="6.2" font-weight="700" text-anchor="middle" fill="#2b2d30" textLength="36.8" lengthAdjust="spacingAndGlyphs">TRANSPOSE</text>
<text x="36.0" y="496.6" font-size="16.2" font-weight="700" text-anchor="start" fill="#e4e6e8" textLength="39.1" lengthAdjust="spacingAndGlyphs" stroke="#e4e6e8" stroke-width="0.5" stroke-linejoin="round">ARP</text>
<rect x="137.7" y="484.0" width="13.7" height="13.6" rx="2" fill="#505356"/>
<rect x="140.1" y="490.6" width="9.0" height="6.2" rx="1" fill="none" stroke="#cfd1d3" stroke-width="1.05"/>
<path d="M141.4 490.6V488.2A3.2 3.2 0 0 1 147.8 488.2V488.6" fill="none" stroke="#cfd1d3" stroke-width="1.05"/>
<rect x="162.0" y="484.0" width="13.8" height="13.6" rx="2" fill="#505356"/>
<path d="M170.97 486.24A5.1 5.1 0 1 1 166.83 486.24" fill="none" stroke="#c3c5c7" stroke-width="1" stroke-linecap="round"/>
<line x1="168.9" y1="485.1" x2="168.9" y2="488.9" stroke="#c3c5c7" stroke-width="1" stroke-linecap="round"/>
<rect x="72.3" y="507.0" width="51.7" height="11.7" rx="2.5" fill="#595c60"/>
<polygon points="79.1,510.2 79.1,515.6 74.9,512.9" fill="#e4e6e8"/>
<polygon points="116.9,510.2 116.9,515.6 121.1,512.9" fill="#e4e6e8"/>
<text x="98.2" y="515.2" font-size="6.4" font-weight="700" text-anchor="middle" fill="#e4e6e8" textLength="12.9" lengthAdjust="spacingAndGlyphs">ARP</text>
<rect x="127.4" y="507.0" width="12.1" height="11.7" rx="2" fill="#595c60"/>
<path d="M135.2 509.0V513.8M132.8 511.4H137.6" fill="none" stroke="#c9a8f5" stroke-width="0.9"/>
<path d="M131.6 513.8V517.0M130.0 515.4H133.2" fill="none" stroke="#e8e46a" stroke-width="0.9"/>
<circle cx="130.2" cy="510.0" r="0.6" fill="#c9a8f5"/>
<rect x="68.8" y="524.2" width="73.8" height="98.3" rx="4" fill="#2a2b2e"/>
<rect x="72.0" y="525.5" width="67.7" height="69.5" rx="4" fill="#232427"/>
<circle cx="104.9" cy="557.2" r="3.6" fill="none" stroke="#c4932e" stroke-width="1.2"/>
<line x1="75.6" y1="607.2" x2="136.1" y2="607.2" stroke="#8e9194" stroke-width="1.2"/>
<circle cx="76.8" cy="607.2" r="2" fill="#a4a7aa"/>
<text x="105.5" y="620.0" font-size="6.4" font-weight="700" text-anchor="middle" fill="#8e9194" textLength="24.3" lengthAdjust="spacingAndGlyphs">EVOLVE</text>
<rect x="32.6" y="631.6" width="55.1" height="11.8" rx="2.5" fill="#595c60"/>
<polygon points="39.1,635.1 39.1,639.9 35.3,637.5" fill="#e4e6e8"/>
<polygon points="81.2,635.1 81.2,639.9 85.0,637.5" fill="#e4e6e8"/>
<text x="60.2" y="639.8" font-size="6.8" font-weight="700" text-anchor="middle" fill="#e4e6e8" textLength="12.6" lengthAdjust="spacingAndGlyphs">1/16</text>
<text x="60.2" y="654.8" font-size="6.6" font-weight="700" text-anchor="middle" fill="#e4e6e8" textLength="16.7" lengthAdjust="spacingAndGlyphs">RATE</text>
<rect x="121.3" y="632.3" width="54.3" height="10.9" rx="2.5" fill="#5d6064" stroke="#d8dadc" stroke-width="0.8"/>
<text x="148.3" y="641.0" font-size="8.4" font-weight="700" text-anchor="middle" fill="#e4e6e8" textLength="11.5" lengthAdjust="spacingAndGlyphs">Off</text>
<polygon points="169.0,636.5 172.4,636.5 170.7,639.5" fill="#e4e6e8"/>
<text x="148.3" y="654.8" font-size="6.6" font-weight="700" text-anchor="middle" fill="#e4e6e8" textLength="21.4" lengthAdjust="spacingAndGlyphs">SCALE</text>
<rect x="32.6" y="668.0" width="55.1" height="12.0" rx="2.5" fill="#595c60"/>
<text x="60.2" y="676.3" font-size="6.8" font-weight="700" text-anchor="middle" fill="#e4e6e8" textLength="11.2" lengthAdjust="spacingAndGlyphs">0 %</text>
<text x="60.2" y="691.4" font-size="6.6" font-weight="700" text-anchor="middle" fill="#e4e6e8" textLength="21.4" lengthAdjust="spacingAndGlyphs">SWING</text>
<rect x="121.1" y="668.0" width="54.5" height="12.0" rx="2.5" fill="#595c60"/>
<polygon points="127.6,671.6 127.6,676.4 123.8,674.0" fill="#e4e6e8"/>
<polygon points="169.1,671.6 169.1,676.4 172.9,674.0" fill="#e4e6e8"/>
<text x="148.3" y="676.3" font-size="6.8" font-weight="700" text-anchor="middle" fill="#e4e6e8" textLength="3.6" lengthAdjust="spacingAndGlyphs">0</text>
<text x="148.3" y="691.4" font-size="6.6" font-weight="700" text-anchor="middle" fill="#e4e6e8" textLength="25.3" lengthAdjust="spacingAndGlyphs">OCTAVE</text>
<rect x="32.6" y="704.5" width="55.1" height="11.8" rx="2.5" fill="#595c60"/>
<text x="60.2" y="712.7" font-size="6.8" font-weight="700" text-anchor="middle" fill="#e4e6e8" textLength="14.8" lengthAdjust="spacingAndGlyphs">50 %</text>
<text x="60.2" y="727.7" font-size="6.6" font-weight="700" text-anchor="middle" fill="#e4e6e8" textLength="44.7" lengthAdjust="spacingAndGlyphs">GATE LENGTH</text>
<rect x="121.1" y="704.5" width="54.5" height="11.8" rx="2.5" fill="#595c60"/>
<polygon points="127.6,708.0 127.6,712.8 123.8,710.4" fill="#e4e6e8"/>
<polygon points="169.1,708.0 169.1,712.8 172.9,710.4" fill="#e4e6e8"/>
<text x="148.3" y="712.7" font-size="6.8" font-weight="700" text-anchor="middle" fill="#e4e6e8" textLength="9.0" lengthAdjust="spacingAndGlyphs">UP</text>
<text x="148.3" y="727.7" font-size="6.6" font-weight="700" text-anchor="middle" fill="#e4e6e8" textLength="18.9" lengthAdjust="spacingAndGlyphs">MODE</text>
<text x="207.0" y="496.6" font-size="16.2" font-weight="700" text-anchor="start" fill="#e4e6e8" textLength="77.6" lengthAdjust="spacingAndGlyphs" stroke="#e4e6e8" stroke-width="0.5" stroke-linejoin="round">COLOUR</text>
<rect x="291.1" y="485.3" width="83.9" height="12.2" rx="2.5" fill="#595c60"/>
<polygon points="298.1,488.1 298.1,494.7 293.1,491.4" fill="#e4e6e8"/>
<polygon points="354.5,488.1 354.5,494.7 359.5,491.4" fill="#e4e6e8"/>
<text x="328.0" y="493.8" font-size="6.8" font-weight="700" text-anchor="middle" fill="#e4e6e8" textLength="48.8" lengthAdjust="spacingAndGlyphs">Load FX Preset</text>
<rect x="362.5" y="486.6" width="10.4" height="9.6" rx="1.2" fill="none" stroke="#e4e6e8" stroke-width="0.9"/>
<path d="M367.7 488.4V494.0M365.1 491.4L367.7 494.2L370.3 491.4" fill="none" stroke="#e4e6e8" stroke-width="0.9"/>
<rect x="381.3" y="484.0" width="13.7" height="13.5" rx="2" fill="#505356"/>
<rect x="383.6" y="490.6" width="9.0" height="6.2" rx="1" fill="none" stroke="#cfd1d3" stroke-width="1.05"/>
<path d="M384.9 490.6V488.1A3.2 3.2 0 0 1 391.3 488.1V488.6" fill="none" stroke="#cfd1d3" stroke-width="1.05"/>
<rect x="402.6" y="484.0" width="14.0" height="13.5" rx="2" fill="#f0a335"/>
<path d="M411.67 486.19A5.1 5.1 0 1 1 407.53 486.19" fill="none" stroke="#7a4d10" stroke-width="1" stroke-linecap="round"/>
<line x1="409.6" y1="485.1" x2="409.6" y2="488.9" stroke="#7a4d10" stroke-width="1" stroke-linecap="round"/>
<rect x="284.0" y="506.9" width="54.6" height="11.9" rx="3.5" fill="#d5dbdf"/>
<text x="298.0" y="515.1" font-size="6.4" font-weight="700" text-anchor="middle" fill="#2e3033" textLength="12.6" lengthAdjust="spacingAndGlyphs">PRE</text>
<text x="323.4" y="515.1" font-size="6.4" font-weight="400" text-anchor="middle" fill="#a9adb1" textLength="16.6" lengthAdjust="spacingAndGlyphs">POST</text>
<path d="M239.4 554C232 554 228.7 558 228.7 566V585.6" fill="none" stroke="#8e9194" stroke-width="0.7" stroke-dasharray="1.2 1.6" stroke-linecap="butt"/>
<path d="M228.7 626V640C228.7 650 232 654 239.4 656" fill="none" stroke="#8e9194" stroke-width="0.7" stroke-dasharray="1.2 1.6" stroke-linecap="butt"/>
<path d="M273.4 554C280.6 554 283.6 558 283.6 566V578C283.6 586 286.6 589 294 589" fill="none" stroke="#8e9194" stroke-width="0.7" stroke-dasharray="1.2 1.6" stroke-linecap="butt"/>
<path d="M328.5 589C335 589 338 586 338 578V566C338 558 341 554 348.4 554" fill="none" stroke="#8e9194" stroke-width="0.7" stroke-dasharray="1.2 1.6" stroke-linecap="butt"/>
<path d="M382.4 554C390 554 393 558 393 566V585.6" fill="none" stroke="#8e9194" stroke-width="0.7" stroke-dasharray="1.2 1.6" stroke-linecap="butt"/>
<path d="M393 626V640C393 650 390 654 382.4 656" fill="none" stroke="#8e9194" stroke-width="0.7" stroke-dasharray="1.2 1.6" stroke-linecap="butt"/>
<path d="M245.72 565.49A16.3 16.3 0 1 1 266.68 565.49" fill="none" stroke="#b48be3" stroke-width="1.9" stroke-linecap="round"/>
<circle cx="247.8" cy="563.4" r="1.5" fill="#b48be3"/>
<text x="256.2" y="555.7" font-size="7.6" font-weight="400" text-anchor="middle" fill="#e4e6e8" textLength="10.2" lengthAdjust="spacingAndGlyphs" stroke="#e4e6e8" stroke-width="0.22">0 %</text>
<text x="256.2" y="575.6" font-size="6.6" font-weight="700" text-anchor="middle" fill="#e4e6e8" textLength="17.2" lengthAdjust="spacingAndGlyphs">DUST</text>
<path d="M218.22 614.99A16.3 16.3 0 1 1 239.18 614.99" fill="none" stroke="#b48be3" stroke-width="1.9" stroke-linecap="round"/>
<circle cx="229.4" cy="589.1" r="1.5" fill="#b48be3"/>
<text x="228.7" y="605.2" font-size="7.6" font-weight="400" text-anchor="middle" fill="#e4e6e8" textLength="13.5" lengthAdjust="spacingAndGlyphs" stroke="#e4e6e8" stroke-width="0.22">50 %</text>
<text x="228.7" y="625.2" font-size="6.6" font-weight="700" text-anchor="middle" fill="#e4e6e8" textLength="19.3" lengthAdjust="spacingAndGlyphs">CRISP</text>
<path d="M245.72 668.89A16.3 16.3 0 1 1 266.68 668.89" fill="none" stroke="#b48be3" stroke-width="1.9" stroke-linecap="round"/>
<circle cx="247.8" cy="666.8" r="1.5" fill="#b48be3"/>
<text x="256.2" y="659.1" font-size="7.6" font-weight="400" text-anchor="middle" fill="#e4e6e8" textLength="10.2" lengthAdjust="spacingAndGlyphs" stroke="#e4e6e8" stroke-width="0.22">0 %</text>
<text x="256.2" y="680.0" font-size="6.6" font-weight="700" text-anchor="middle" fill="#e4e6e8" textLength="21.4" lengthAdjust="spacingAndGlyphs">PRESS</text>
<path d="M355.02 565.49A16.3 16.3 0 1 1 375.98 565.49" fill="none" stroke="#efec72" stroke-width="1.9" stroke-linecap="round"/>
<circle cx="357.1" cy="563.4" r="1.5" fill="#efec72"/>
<text x="365.5" y="555.7" font-size="7.6" font-weight="400" text-anchor="middle" fill="#e4e6e8" textLength="10.2" lengthAdjust="spacingAndGlyphs" stroke="#e4e6e8" stroke-width="0.22">0 %</text>
<text x="365.5" y="575.6" font-size="6.6" font-weight="700" text-anchor="middle" fill="#e4e6e8" textLength="17.2" lengthAdjust="spacingAndGlyphs">DUST</text>
<path d="M382.52 614.99A16.3 16.3 0 1 1 403.48 614.99" fill="none" stroke="#efec72" stroke-width="1.9" stroke-linecap="round"/>
<circle cx="386.1" cy="591.0" r="1.5" fill="#efec72"/>
<text x="393.0" y="605.2" font-size="7.6" font-weight="400" text-anchor="middle" fill="#e4e6e8" textLength="13.5" lengthAdjust="spacingAndGlyphs" stroke="#e4e6e8" stroke-width="0.22">38 %</text>
<text x="393.0" y="625.2" font-size="6.6" font-weight="700" text-anchor="middle" fill="#e4e6e8" textLength="19.3" lengthAdjust="spacingAndGlyphs">CRISP</text>
<path d="M355.02 668.89A16.3 16.3 0 1 1 375.98 668.89" fill="none" stroke="#efec72" stroke-width="1.9" stroke-linecap="round"/>
<circle cx="357.3" cy="645.8" r="1.5" fill="#efec72"/>
<text x="365.5" y="659.1" font-size="7.6" font-weight="400" text-anchor="middle" fill="#e4e6e8" textLength="13.5" lengthAdjust="spacingAndGlyphs" stroke="#e4e6e8" stroke-width="0.22">38 %</text>
<text x="365.5" y="680.0" font-size="6.6" font-weight="700" text-anchor="middle" fill="#e4e6e8" textLength="21.4" lengthAdjust="spacingAndGlyphs">PRESS</text>
<path d="M294 589H304.6C307 589 307.6 590 308.6 592.4L316.6 613C317.6 615.6 318.4 616.4 320.6 616.4H328.6" fill="none" stroke="#efec72" stroke-width="1.5"/>
<path d="M294 616.4H302C304.4 616.4 305 615.6 306 613L314 592.4C315 590 315.8 589 318 589H328.6" fill="none" stroke="#b48be3" stroke-width="1.5"/>
<text x="311.3" y="627.0" font-size="6.6" font-weight="700" text-anchor="middle" fill="#e4e6e8" textLength="22.1" lengthAdjust="spacingAndGlyphs">XOVER</text>
<path d="M300.66 717.96A16.4 16.4 0 1 1 321.74 717.96" fill="none" stroke="#e4e6e8" stroke-width="1.6" stroke-linecap="round"/>
<circle cx="311.2" cy="691.9" r="1.5" fill="#e4e6e8"/>
<text x="311.2" y="708.1" font-size="7.6" font-weight="400" text-anchor="middle" fill="#e4e6e8" textLength="14.8" lengthAdjust="spacingAndGlyphs" stroke="#e4e6e8" stroke-width="0.22">50/50</text>
<text x="311.2" y="728.4" font-size="6.6" font-weight="700" text-anchor="middle" fill="#e4e6e8" textLength="11.2" lengthAdjust="spacingAndGlyphs">MIX</text>
<text x="447.5" y="496.6" font-size="16.2" font-weight="700" text-anchor="start" fill="#e4e6e8" textLength="46.6" lengthAdjust="spacingAndGlyphs" stroke="#e4e6e8" stroke-width="0.5" stroke-linejoin="round">TIME</text>
<rect x="530.0" y="485.6" width="103.5" height="11.8" rx="2.5" fill="#595c60"/>
<polygon points="537.1,488.2 537.1,494.8 532.1,491.5" fill="#e4e6e8"/>
<polygon points="612.8,488.2 612.8,494.8 617.8,491.5" fill="#e4e6e8"/>
<text x="576.2" y="493.9" font-size="6.8" font-weight="700" text-anchor="middle" fill="#e4e6e8" textLength="48.8" lengthAdjust="spacingAndGlyphs">Load FX Preset</text>
<rect x="621.2" y="486.9" width="10.5" height="9.2" rx="1.2" fill="none" stroke="#e4e6e8" stroke-width="0.9"/>
<path d="M626.5 488.5V494.1M623.9 491.5L626.5 494.3L629.1 491.5" fill="none" stroke="#e4e6e8" stroke-width="0.9"/>
<rect x="655.6" y="483.8" width="13.6" height="13.9" rx="1.5" fill="#55585c"/>
<path d="M660.8 485.8H664.0L666.2 495.7H658.6Z" fill="none" stroke="#d0d3d6" stroke-width="0.9" stroke-linejoin="round"/>
<line x1="659.4" y1="493.1" x2="665.4" y2="493.1" stroke="#d0d3d6" stroke-width="0.8"/>
<line x1="662.4" y1="493.1" x2="664.0" y2="487.4" stroke="#d0d3d6" stroke-width="0.8"/>
<rect x="679.2" y="483.8" width="13.6" height="13.9" rx="2" fill="#505356"/>
<rect x="681.5" y="490.6" width="9.0" height="6.2" rx="1" fill="none" stroke="#cfd1d3" stroke-width="1.05"/>
<path d="M682.8 490.6V488.1A3.2 3.2 0 0 1 689.2 488.1V488.6" fill="none" stroke="#cfd1d3" stroke-width="1.05"/>
<rect x="703.4" y="483.8" width="14.2" height="13.9" rx="2" fill="#f0a335"/>
<path d="M712.57 486.19A5.1 5.1 0 1 1 708.43 486.19" fill="none" stroke="#7a4d10" stroke-width="1" stroke-linecap="round"/>
<line x1="710.5" y1="485.1" x2="710.5" y2="488.9" stroke="#7a4d10" stroke-width="1" stroke-linecap="round"/>
<path d="M554.7 512.6H494C488 512.6 486.4 516 486.4 521V530" fill="none" stroke="#b3944a" stroke-width="0.7" stroke-dasharray="1.6 1.4"/>
<path d="M609.5 512.6H670C676 512.6 677.6 516 677.6 521V530" fill="none" stroke="#b3944a" stroke-width="0.7" stroke-dasharray="1.6 1.4"/>
<line x1="549.8" y1="513.0" x2="549.8" y2="530.0" stroke="#b3944a" stroke-width="0.7" stroke-dasharray="1.6 1.4"/>
<line x1="613.6" y1="513.0" x2="613.6" y2="530.0" stroke="#b3944a" stroke-width="0.7" stroke-dasharray="1.6 1.4"/>
<rect x="554.7" y="506.8" width="54.8" height="12.1" rx="3.5" fill="#d5dbdf"/>
<text x="568.7" y="515.1" font-size="6.4" font-weight="700" text-anchor="middle" fill="#2e3033" textLength="11.8" lengthAdjust="spacingAndGlyphs">TAP</text>
<text x="594.1" y="515.1" font-size="6.4" font-weight="400" text-anchor="middle" fill="#a9adb1" textLength="17.0" lengthAdjust="spacingAndGlyphs">LOOP</text>
<rect x="464.6" y="531.6" width="44.2" height="44.2" rx="2" fill="#36383c" stroke="#b48be3" stroke-width="1.4"/>
<circle cx="483.0" cy="553.7" r="3.3" fill="none" stroke="#f0a335" stroke-width="1.3"/>
<text transform="translate(460.9 579.4) rotate(-90)" font-size="6.7" font-weight="700" fill="#e4e6e8" textLength="46.4" lengthAdjust="spacingAndGlyphs">LEVEL -6.02 dB</text>
<text x="466.3" y="586.2" font-size="6.2" font-weight="700" text-anchor="start" fill="#e4e6e8" textLength="13.5" lengthAdjust="spacingAndGlyphs">TIME</text>
<text x="509.3" y="586.4" font-size="7.2" font-weight="400" text-anchor="end" fill="#e4e6e8" textLength="18.4" lengthAdjust="spacingAndGlyphs" stroke="#e4e6e8" stroke-width="0.22">308 ms</text>
<line x1="486.0" y1="579.0" x2="486.0" y2="592.0" stroke="#b3944a" stroke-width="0.7" stroke-dasharray="1.6 1.4"/>
<path d="M486.0 605.3L474.06 616.83A16.6 16.6 0 0 1 474.06 593.77Z" fill="#6b6e71" opacity="1"/>
<path d="M486.0 605.3L497.94 593.77A16.6 16.6 0 0 1 497.94 616.83Z" fill="#6b6e71" opacity="1"/>
<path d="M486.0 605.3L480.96 610.16A7 7 0 0 1 480.96 600.44Z" fill="#e4e6e8" opacity="1"/>
<path d="M486.0 605.3L494.99 596.62A12.5 12.5 0 0 1 494.99 613.98Z" fill="#e4e6e8" opacity="1"/>
<circle cx="486.0" cy="605.3" r="3.2" fill="#3b3f42"/>
<circle cx="486.0" cy="605.3" r="1.6" fill="#eceef0"/>
<text x="486.0" y="626.6" font-size="6.4" font-weight="700" text-anchor="middle" fill="#e4e6e8" textLength="12.5" lengthAdjust="spacingAndGlyphs">PAN</text>
<line x1="486.0" y1="630.0" x2="486.0" y2="638.6" stroke="#b3944a" stroke-width="0.7" stroke-dasharray="1.6 1.4"/>
<path d="M475.46 669.26A16.4 16.4 0 1 1 496.54 669.26" fill="none" stroke="#e4e6e8" stroke-width="1.6" stroke-linecap="round"/>
<circle cx="497.9" cy="650.4" r="1.5" fill="#e4e6e8"/>
<text x="486.0" y="659.4" font-size="7.6" font-weight="400" text-anchor="middle" fill="#e4e6e8" textLength="13.5" lengthAdjust="spacingAndGlyphs" stroke="#e4e6e8" stroke-width="0.22">80 %</text>
<text x="486.0" y="679.6" font-size="6.4" font-weight="700" text-anchor="middle" fill="#e4e6e8" textLength="34.0" lengthAdjust="spacingAndGlyphs">FEEDBACK</text>
<rect x="528.2" y="531.6" width="44.2" height="44.2" rx="2" fill="#36383c" stroke="#b48be3" stroke-width="1.4"/>
<circle cx="549.0" cy="553.7" r="3.3" fill="none" stroke="#f0a335" stroke-width="1.3"/>
<text transform="translate(524.5 579.4) rotate(-90)" font-size="6.7" font-weight="700" fill="#e4e6e8" textLength="46.4" lengthAdjust="spacingAndGlyphs">LEVEL -6.02 dB</text>
<text x="529.9" y="586.2" font-size="6.2" font-weight="700" text-anchor="start" fill="#e4e6e8" textLength="13.5" lengthAdjust="spacingAndGlyphs">TIME</text>
<text x="572.9" y="586.4" font-size="7.2" font-weight="400" text-anchor="end" fill="#e4e6e8" textLength="18.4" lengthAdjust="spacingAndGlyphs" stroke="#e4e6e8" stroke-width="0.22">450 ms</text>
<line x1="549.6" y1="579.0" x2="549.6" y2="592.0" stroke="#b3944a" stroke-width="0.7" stroke-dasharray="1.6 1.4"/>
<path d="M549.6 605.3L537.66 616.83A16.6 16.6 0 0 1 537.66 593.77Z" fill="#6b6e71" opacity="1"/>
<path d="M549.6 605.3L561.54 593.77A16.6 16.6 0 0 1 561.54 616.83Z" fill="#6b6e71" opacity="1"/>
<path d="M549.6 605.3L540.10 614.47A13.2 13.2 0 0 1 540.10 596.13Z" fill="#e4e6e8" opacity="1"/>
<path d="M549.6 605.3L554.20 600.85A6.4 6.4 0 0 1 554.20 609.75Z" fill="#e4e6e8" opacity="1"/>
<circle cx="549.6" cy="605.3" r="3.2" fill="#3b3f42"/>
<circle cx="549.6" cy="605.3" r="1.6" fill="#eceef0"/>
<text x="549.6" y="626.6" font-size="6.4" font-weight="700" text-anchor="middle" fill="#e4e6e8" textLength="12.5" lengthAdjust="spacingAndGlyphs">PAN</text>
<line x1="549.6" y1="630.0" x2="549.6" y2="638.6" stroke="#b3944a" stroke-width="0.7" stroke-dasharray="1.6 1.4"/>
<path d="M539.06 669.26A16.4 16.4 0 1 1 560.14 669.26" fill="none" stroke="#e4e6e8" stroke-width="1.6" stroke-linecap="round"/>
<circle cx="557.9" cy="646.1" r="1.5" fill="#e4e6e8"/>
<text x="549.6" y="659.4" font-size="7.6" font-weight="400" text-anchor="middle" fill="#e4e6e8" textLength="13.5" lengthAdjust="spacingAndGlyphs" stroke="#e4e6e8" stroke-width="0.22">69 %</text>
<text x="549.6" y="679.6" font-size="6.4" font-weight="700" text-anchor="middle" fill="#e4e6e8" textLength="34.0" lengthAdjust="spacingAndGlyphs">FEEDBACK</text>
<rect x="591.8" y="531.6" width="44.2" height="44.2" rx="2" fill="#36383c" stroke="#b48be3" stroke-width="1.4"/>
<circle cx="616.2" cy="553.7" r="3.3" fill="none" stroke="#f0a335" stroke-width="1.3"/>
<text transform="translate(588.1 579.4) rotate(-90)" font-size="6.7" font-weight="700" fill="#e4e6e8" textLength="46.4" lengthAdjust="spacingAndGlyphs">LEVEL -6.02 dB</text>
<text x="593.5" y="586.2" font-size="6.2" font-weight="700" text-anchor="start" fill="#e4e6e8" textLength="13.5" lengthAdjust="spacingAndGlyphs">TIME</text>
<text x="636.5" y="586.4" font-size="7.2" font-weight="400" text-anchor="end" fill="#e4e6e8" textLength="18.4" lengthAdjust="spacingAndGlyphs" stroke="#e4e6e8" stroke-width="0.22">759 ms</text>
<line x1="613.2" y1="579.0" x2="613.2" y2="592.0" stroke="#b3944a" stroke-width="0.7" stroke-dasharray="1.6 1.4"/>
<path d="M613.2 605.3L601.26 616.83A16.6 16.6 0 0 1 601.26 593.77Z" fill="#6b6e71" opacity="1"/>
<path d="M613.2 605.3L625.14 593.77A16.6 16.6 0 0 1 625.14 616.83Z" fill="#6b6e71" opacity="1"/>
<path d="M613.2 605.3L609.46 608.91A5.2 5.2 0 0 1 609.46 601.69Z" fill="#e4e6e8" opacity="1"/>
<path d="M613.2 605.3L623.41 595.44A14.2 14.2 0 0 1 623.41 615.16Z" fill="#e4e6e8" opacity="1"/>
<circle cx="613.2" cy="605.3" r="3.2" fill="#3b3f42"/>
<circle cx="613.2" cy="605.3" r="1.6" fill="#eceef0"/>
<text x="613.2" y="626.6" font-size="6.4" font-weight="700" text-anchor="middle" fill="#e4e6e8" textLength="12.5" lengthAdjust="spacingAndGlyphs">PAN</text>
<line x1="613.2" y1="630.0" x2="613.2" y2="638.6" stroke="#b3944a" stroke-width="0.7" stroke-dasharray="1.6 1.4"/>
<path d="M602.66 669.26A16.4 16.4 0 1 1 623.74 669.26" fill="none" stroke="#e4e6e8" stroke-width="1.6" stroke-linecap="round"/>
<circle cx="620.2" cy="645.1" r="1.5" fill="#e4e6e8"/>
<text x="613.2" y="659.4" font-size="7.6" font-weight="400" text-anchor="middle" fill="#e4e6e8" textLength="13.5" lengthAdjust="spacingAndGlyphs" stroke="#e4e6e8" stroke-width="0.22">67 %</text>
<text x="613.2" y="679.6" font-size="6.4" font-weight="700" text-anchor="middle" fill="#e4e6e8" textLength="34.0" lengthAdjust="spacingAndGlyphs">FEEDBACK</text>
<rect x="655.4" y="531.6" width="44.2" height="44.2" rx="2" fill="#36383c" stroke="#b48be3" stroke-width="1.4"/>
<circle cx="683.4" cy="553.7" r="3.3" fill="none" stroke="#f0a335" stroke-width="1.3"/>
<text transform="translate(651.7 579.4) rotate(-90)" font-size="6.7" font-weight="700" fill="#e4e6e8" textLength="46.4" lengthAdjust="spacingAndGlyphs">LEVEL -6.02 dB</text>
<text x="657.1" y="586.2" font-size="6.2" font-weight="700" text-anchor="start" fill="#e4e6e8" textLength="13.5" lengthAdjust="spacingAndGlyphs">TIME</text>
<text x="700.1" y="586.4" font-size="7.2" font-weight="400" text-anchor="end" fill="#e4e6e8" textLength="21.1" lengthAdjust="spacingAndGlyphs" stroke="#e4e6e8" stroke-width="0.22">1169 ms</text>
<line x1="676.8" y1="579.0" x2="676.8" y2="592.0" stroke="#b3944a" stroke-width="0.7" stroke-dasharray="1.6 1.4"/>
<path d="M676.8 605.3L664.86 616.83A16.6 16.6 0 0 1 664.86 593.77Z" fill="#6b6e71" opacity="1"/>
<path d="M676.8 605.3L688.74 593.77A16.6 16.6 0 0 1 688.74 616.83Z" fill="#56595c" opacity="1"/>
<path d="M676.8 605.3L664.86 616.83A16.6 16.6 0 0 1 664.86 593.77Z" fill="#e4e6e8" opacity="1"/>
<circle cx="676.8" cy="605.3" r="3.2" fill="#3b3f42"/>
<circle cx="676.8" cy="605.3" r="1.6" fill="#eceef0"/>
<text x="676.8" y="626.6" font-size="6.4" font-weight="700" text-anchor="middle" fill="#e4e6e8" textLength="12.5" lengthAdjust="spacingAndGlyphs">PAN</text>
<line x1="676.8" y1="630.0" x2="676.8" y2="638.6" stroke="#b3944a" stroke-width="0.7" stroke-dasharray="1.6 1.4"/>
<path d="M666.26 669.26A16.4 16.4 0 1 1 687.34 669.26" fill="none" stroke="#e4e6e8" stroke-width="1.6" stroke-linecap="round"/>
<circle cx="676.8" cy="643.2" r="1.5" fill="#e4e6e8"/>
<text x="676.8" y="659.4" font-size="7.6" font-weight="400" text-anchor="middle" fill="#e4e6e8" textLength="13.5" lengthAdjust="spacingAndGlyphs" stroke="#e4e6e8" stroke-width="0.22">54 %</text>
<text x="676.8" y="679.6" font-size="6.4" font-weight="700" text-anchor="middle" fill="#e4e6e8" textLength="34.0" lengthAdjust="spacingAndGlyphs">FEEDBACK</text>
<path d="M501.1 716.6H507.4C509 716.6 509.6 716 510 714.4L516.4 691.4C516.3 689.8 517.4 689.2 519 689.2H535.4" fill="none" stroke="#b48be3" stroke-width="1.5"/>
<path d="M565.3 689.2H578C579.6 689.2 580.2 689.8 580.6 691.4L587 714.4C587.4 716 588 716.6 589.6 716.6H599" fill="none" stroke="#efec72" stroke-width="1.5"/>
<text x="517.8" y="728.2" font-size="6.4" font-weight="700" text-anchor="middle" fill="#e4e6e8" textLength="12.2" lengthAdjust="spacingAndGlyphs">HPF</text>
<text x="581.7" y="728.2" font-size="6.4" font-weight="700" text-anchor="middle" fill="#e4e6e8" textLength="11.5" lengthAdjust="spacingAndGlyphs">LPF</text>
<path d="M635.36 718.36A16.4 16.4 0 1 1 656.44 718.36" fill="none" stroke="#e4e6e8" stroke-width="1.6" stroke-linecap="round"/>
<circle cx="650.5" cy="693.1" r="1.5" fill="#e4e6e8"/>
<text x="645.9" y="708.4" font-size="7.2" font-weight="400" text-anchor="middle" fill="#e4e6e8" textLength="21.2" lengthAdjust="spacingAndGlyphs" stroke="#e4e6e8" stroke-width="0.22">-4.85 dB</text>
<text x="645.9" y="728.2" font-size="6.4" font-weight="700" text-anchor="middle" fill="#e4e6e8" textLength="19.7" lengthAdjust="spacingAndGlyphs">LEVEL</text>
<text x="748.5" y="496.8" font-size="16.2" font-weight="700" text-anchor="start" fill="#e4e6e8" textLength="62.1" lengthAdjust="spacingAndGlyphs" stroke="#e4e6e8" stroke-width="0.5" stroke-linejoin="round">SPACE</text>
<rect x="827.1" y="485.5" width="103.1" height="12.3" rx="2.5" fill="#595c60"/>
<polygon points="834.3,488.3 834.3,494.9 829.3,491.6" fill="#e4e6e8"/>
<polygon points="909.3,488.3 909.3,494.9 914.3,491.6" fill="#e4e6e8"/>
<text x="872.7" y="494.0" font-size="6.8" font-weight="700" text-anchor="middle" fill="#e4e6e8" textLength="48.8" lengthAdjust="spacingAndGlyphs">Load FX Preset</text>
<rect x="917.8" y="486.8" width="10.5" height="9.7" rx="1.2" fill="none" stroke="#e4e6e8" stroke-width="0.9"/>
<path d="M923.0 488.6V494.2M920.4 491.6L923.0 494.4L925.6 491.6" fill="none" stroke="#e4e6e8" stroke-width="0.9"/>
<rect x="950.1" y="483.6" width="13.7" height="14.2" rx="2" fill="#505356"/>
<rect x="952.5" y="490.5" width="9.0" height="6.2" rx="1" fill="none" stroke="#cfd1d3" stroke-width="1.05"/>
<path d="M953.8 490.5V488.1A3.2 3.2 0 0 1 960.2 488.1V488.5" fill="none" stroke="#cfd1d3" stroke-width="1.05"/>
<rect x="974.2" y="483.6" width="14.2" height="14.2" rx="2" fill="#f0a335"/>
<path d="M983.37 486.14A5.1 5.1 0 1 1 979.23 486.14" fill="none" stroke="#7a4d10" stroke-width="1" stroke-linecap="round"/>
<line x1="981.3" y1="485.0" x2="981.3" y2="488.8" stroke="#7a4d10" stroke-width="1" stroke-linecap="round"/>
<rect x="840.7" y="506.8" width="54.7" height="12.1" rx="3.5" fill="#d5dbdf"/>
<text transform="translate(868 515.2) scale(-1 1)" font-size="6.6" font-weight="700" text-anchor="middle" fill="#2e3033" textLength="30" lengthAdjust="spacingAndGlyphs">REVERSE</text>
<line x1="764.0" y1="540.2" x2="779.0" y2="540.2" stroke="#6f5a93" stroke-width="0.8" stroke-dasharray="1.2 1.4"/>
<line x1="756.5" y1="543.3" x2="770.5" y2="543.3" stroke="#6f5a93" stroke-width="0.8" stroke-dasharray="1.2 1.4"/>
<line x1="747.6" y1="549.4" x2="773.0" y2="549.4" stroke="#6f5a93" stroke-width="0.8" stroke-dasharray="1.2 1.4"/>
<line x1="750.0" y1="555.5" x2="766.7" y2="555.5" stroke="#6f5a93" stroke-width="0.8" stroke-dasharray="1.2 1.4"/>
<line x1="756.5" y1="561.3" x2="779.4" y2="561.3" stroke="#6f5a93" stroke-width="0.8" stroke-dasharray="1.2 1.4"/>
<line x1="827.6" y1="540.2" x2="849.2" y2="540.2" stroke="#6f5a93" stroke-width="0.8" stroke-dasharray="1.2 1.4"/>
<line x1="823.8" y1="546.3" x2="841.6" y2="546.3" stroke="#6f5a93" stroke-width="0.8" stroke-dasharray="1.2 1.4"/>
<line x1="820.8" y1="549.4" x2="848.0" y2="549.4" stroke="#6f5a93" stroke-width="0.8" stroke-dasharray="1.2 1.4"/>
<line x1="830.0" y1="552.4" x2="848.0" y2="552.4" stroke="#6f5a93" stroke-width="0.8" stroke-dasharray="1.2 1.4"/>
<line x1="818.2" y1="558.3" x2="830.0" y2="558.3" stroke="#6f5a93" stroke-width="0.8" stroke-dasharray="1.2 1.4"/>
<line x1="827.0" y1="564.4" x2="845.4" y2="564.4" stroke="#6f5a93" stroke-width="0.8" stroke-dasharray="1.2 1.4"/>
<line x1="898.0" y1="540.2" x2="917.8" y2="540.2" stroke="#6f5a93" stroke-width="0.8" stroke-dasharray="1.2 1.4"/>
<line x1="892.4" y1="546.3" x2="910.6" y2="546.3" stroke="#6f5a93" stroke-width="0.8" stroke-dasharray="1.2 1.4"/>
<line x1="904.6" y1="549.4" x2="917.8" y2="549.4" stroke="#6f5a93" stroke-width="0.8" stroke-dasharray="1.2 1.4"/>
<line x1="891.0" y1="552.4" x2="905.0" y2="552.4" stroke="#6f5a93" stroke-width="0.8" stroke-dasharray="1.2 1.4"/>
<line x1="895.0" y1="555.5" x2="909.6" y2="555.5" stroke="#6f5a93" stroke-width="0.8" stroke-dasharray="1.2 1.4"/>
<line x1="898.0" y1="558.3" x2="919.8" y2="558.3" stroke="#6f5a93" stroke-width="0.8" stroke-dasharray="1.2 1.4"/>
<line x1="888.0" y1="564.4" x2="906.3" y2="564.4" stroke="#6f5a93" stroke-width="0.8" stroke-dasharray="1.2 1.4"/>
<line x1="968.5" y1="540.2" x2="987.6" y2="540.2" stroke="#6f5a93" stroke-width="0.8" stroke-dasharray="1.2 1.4"/>
<line x1="966.8" y1="543.3" x2="980.0" y2="543.3" stroke="#6f5a93" stroke-width="0.8" stroke-dasharray="1.2 1.4"/>
<line x1="957.9" y1="546.3" x2="975.0" y2="546.3" stroke="#6f5a93" stroke-width="0.8" stroke-dasharray="1.2 1.4"/>
<line x1="963.5" y1="552.4" x2="977.4" y2="552.4" stroke="#6f5a93" stroke-width="0.8" stroke-dasharray="1.2 1.4"/>
<line x1="966.0" y1="555.5" x2="988.9" y2="555.5" stroke="#6f5a93" stroke-width="0.8" stroke-dasharray="1.2 1.4"/>
<line x1="964.7" y1="558.3" x2="982.5" y2="558.3" stroke="#6f5a93" stroke-width="0.8" stroke-dasharray="1.2 1.4"/>
<line x1="957.9" y1="561.3" x2="969.8" y2="561.3" stroke="#6f5a93" stroke-width="0.8" stroke-dasharray="1.2 1.4"/>
<line x1="958.4" y1="564.4" x2="978.7" y2="564.4" stroke="#6f5a93" stroke-width="0.8" stroke-dasharray="1.2 1.4"/>
<path d="M787.32 563.09A16.3 16.3 0 1 1 808.28 563.09" fill="none" stroke="#e4e6e8" stroke-width="1.6" stroke-linecap="round"/>
<circle cx="790.5" cy="539.4" r="1.5" fill="#e4e6e8"/>
<text x="797.8" y="553.3" font-size="7.6" font-weight="400" text-anchor="middle" fill="#e4e6e8" textLength="6.6" lengthAdjust="spacingAndGlyphs" stroke="#e4e6e8" stroke-width="0.22">25</text>
<text x="797.8" y="572.6" font-size="6.4" font-weight="700" text-anchor="middle" fill="#e4e6e8" textLength="23.8" lengthAdjust="spacingAndGlyphs">GRAINS</text>
<path d="M857.32 563.09A16.3 16.3 0 1 1 878.28 563.09" fill="none" stroke="#e4e6e8" stroke-width="1.6" stroke-linecap="round"/>
<circle cx="880.5" cy="546.5" r="1.5" fill="#e4e6e8"/>
<text x="867.8" y="553.3" font-size="7.6" font-weight="400" text-anchor="middle" fill="#e4e6e8" textLength="13.5" lengthAdjust="spacingAndGlyphs" stroke="#e4e6e8" stroke-width="0.22">76 %</text>
<text x="867.8" y="572.6" font-size="6.4" font-weight="700" text-anchor="middle" fill="#e4e6e8" textLength="13.6" lengthAdjust="spacingAndGlyphs">SIZE</text>
<path d="M927.32 563.09A16.3 16.3 0 1 1 948.28 563.09" fill="none" stroke="#e4e6e8" stroke-width="1.6" stroke-linecap="round"/>
<circle cx="949.3" cy="543.7" r="1.5" fill="#e4e6e8"/>
<text x="937.8" y="553.3" font-size="7.6" font-weight="400" text-anchor="middle" fill="#e4e6e8" textLength="11.5" lengthAdjust="spacingAndGlyphs" stroke="#e4e6e8" stroke-width="0.22">0.70</text>
<text x="937.8" y="572.6" font-size="6.4" font-weight="700" text-anchor="middle" fill="#e4e6e8" textLength="34.0" lengthAdjust="spacingAndGlyphs">FEEDBACK</text>
<path d="M752.6 607.6C747.6 604.6 748.4 595.4 755 594.6C761.6 594.6 762.6 603.8 757 606.6C754.6 607.8 752.8 607.4 750 608.4" fill="none" stroke="#a89b4c" stroke-width="0.7" stroke-dasharray="1.8 1.4"/>
<path d="M752.7 607.9C756 610.6 760.3 611 764 608.4C767.4 606 769.6 603.6 771.1 601.5" fill="none" stroke="#a89b4c" stroke-width="0.7" stroke-dasharray="1.8 1.4"/>
<path d="M755.9 621.8C759 619 762 616.6 765.4 616.5C769.6 616.4 773 618 776.2 619.5" fill="none" stroke="#a89b4c" stroke-width="0.7" stroke-dasharray="1.8 1.4"/>
<path d="M818.7 606.6C822.6 606.2 825.6 604.6 827.6 601.5C831 596 833.6 588.8 839 588.2C843.6 587.8 846.6 591.6 849.2 595.2" fill="none" stroke="#a89b4c" stroke-width="0.7" stroke-dasharray="1.8 1.4"/>
<path d="M819.3 616.7C824 615.4 829 615.6 833 616.2C838 617 844 616.6 849.2 615.5" fill="none" stroke="#a89b4c" stroke-width="0.7" stroke-dasharray="1.8 1.4"/>
<path d="M821.4 621.2A8.8 5 0 1 0 839 621.2A8.8 5 0 1 0 821.4 621.2" fill="none" stroke="#a89b4c" stroke-width="0.7" stroke-dasharray="1.8 1.4"/>
<path d="M892.4 604.1C889.4 600.6 890 592.4 895.4 590.8C900.6 590.8 901.6 598 897.6 600.6C895.8 601.8 894 603 892.4 604.1" fill="none" stroke="#a89b4c" stroke-width="0.7" stroke-dasharray="1.8 1.4"/>
<path d="M892.4 604.1C897.6 604.6 903 604.2 907.6 602.9C912 601.4 915.4 597 917.8 592.7" fill="none" stroke="#a89b4c" stroke-width="0.7" stroke-dasharray="1.8 1.4"/>
<path d="M890.3 617.6C894 619.4 898.4 619.6 902.5 618" fill="none" stroke="#a89b4c" stroke-width="0.7" stroke-dasharray="1.8 1.4"/>
<path d="M902.4 618A4 4 0 1 0 910.4 618A4 4 0 1 0 902.4 618" fill="none" stroke="#a89b4c" stroke-width="0.7" stroke-dasharray="1.8 1.4"/>
<path d="M960.9 597.8C966 595.2 972 594 978.7 594C982.6 594 985.4 592.6 987.6 590" fill="none" stroke="#a89b4c" stroke-width="0.7" stroke-dasharray="1.8 1.4"/>
<path d="M959.2 608A5.5 5.5 0 1 0 970.2 608A5.5 5.5 0 1 0 959.2 608" fill="none" stroke="#a89b4c" stroke-width="0.7" stroke-dasharray="1.8 1.4"/>
<path d="M969.8 620.1C975 617.6 982 618 987.6 621.9" fill="none" stroke="#a89b4c" stroke-width="0.7" stroke-dasharray="1.8 1.4"/>
<path d="M789.50 621.10A16.4 16.4 0 1 1 814.04 608.33" fill="none" stroke="#5e6164" stroke-width="1.5"/>
<polyline points="811.00,606.90 810.90,605.75 810.69,604.61 810.39,603.50 809.99,602.43 809.51,601.39 808.94,600.41 808.28,599.49 807.56,598.63 806.76,597.84 805.90,597.13 804.99,596.49 804.03,595.94 803.02,595.48 801.99,595.11 800.93,594.84 799.86,594.66 798.78,594.57 797.70,594.57 796.63,594.68 795.58,594.87 794.55,595.15 793.56,595.52 792.61,595.98 791.70,596.51 790.85,597.11 790.06,597.79 789.33,598.53 788.67,599.33 788.09,600.17 787.59,601.06 787.17,601.99 786.83,602.94 786.58,603.92 786.42,604.91 786.34,605.91 786.35,606.90 786.45,607.88 786.63,608.85 786.89,609.80 787.24,610.71 787.66,611.58 788.15,612.41 788.71,613.19 789.34,613.92 790.02,614.58 790.75,615.18 791.53,615.71 792.35,616.17 793.20,616.55 794.08,616.85 794.97,617.08 795.88,617.22 796.79,617.29 797.70,617.27 798.60,617.18 799.48,617.01 800.34,616.76 801.17,616.45 801.97,616.06 802.73,615.60 803.43,615.09 804.09,614.52 804.69,613.89 805.23,613.22 805.71,612.51 806.12,611.76 806.46,610.99 806.74,610.19 806.94,609.37 807.06,608.55 807.12,607.72 807.10,606.90 807.01,606.09 806.85,605.29 806.62,604.51 806.33,603.76 805.97,603.04 805.56,602.36 805.09,601.73 804.57,601.14 804.00,600.60 803.39,600.11 802.75,599.69 802.08,599.32 801.38,599.02 800.66,598.78 799.92,598.61 799.18,598.50 798.44,598.45 797.70,598.48 796.97,598.56 796.26,598.71 795.56,598.92 794.89,599.19 794.25,599.51 793.65,599.89 793.09,600.31 792.56,600.78 792.09,601.29 791.66,601.83 791.29,602.41 790.97,603.01 790.70,603.64 790.50,604.28 790.35,604.93 790.26,605.59 790.22,606.25 790.25,606.90 790.33,607.54 790.47,608.17 790.66,608.79 790.90,609.37 791.19,609.93 791.53,610.46 791.91,610.96 792.32,611.41 792.78,611.82 793.26,612.19 793.77,612.51 794.30,612.79 794.85,613.01 795.41,613.19 795.98,613.31 796.56,613.38 797.13,613.40 797.70,613.38 798.26,613.30 798.81,613.17 799.33,613.00 799.84,612.78 800.32,612.52 800.78,612.23 801.20,611.89 801.58,611.53 801.93,611.13 802.25,610.71 802.52,610.27 802.74,609.81 802.93,609.34 803.07,608.86 803.17,608.37 803.22,607.87 803.23,607.38 803.20,606.90" fill="none" stroke="#e4e6e8" stroke-width="1.4" stroke-linecap="round"/>
<text x="797.7" y="630.6" font-size="6.4" font-weight="700" text-anchor="middle" fill="#e4e6e8" textLength="40.9" lengthAdjust="spacingAndGlyphs">SWIRL DEPTH</text>
<circle cx="867.6" cy="606.9" r="15.6" fill="none" stroke="#e4e6e8" stroke-width="1.3"/>
<circle cx="867.6" cy="606.9" r="11.8" fill="none" stroke="#e4e6e8" stroke-width="1.3"/>
<circle cx="867.6" cy="606.9" r="8" fill="none" stroke="#e4e6e8" stroke-width="1.3"/>
<path d="M868.38 611.33A4.5 4.5 0 0 1 863.70 604.65" fill="none" stroke="#e4e6e8" stroke-width="1.3"/>
<polygon points="870.5,596.4 870.5,601.4 865.9,598.9" fill="#efec72"/>
<polygon points="865.9,612.6 865.9,617.6 870.5,615.1" fill="#efec72"/>
<polygon points="851.3,605.8 856.3,605.8 853.8,610.4" fill="#efec72"/>
<polygon points="880.9,609.8 885.9,609.8 883.4,605.2" fill="#efec72"/>
<text x="867.6" y="630.6" font-size="6.4" font-weight="700" text-anchor="middle" fill="#e4e6e8" textLength="32.7" lengthAdjust="spacingAndGlyphs">DIRECTION</text>
<path d="M927.32 619.79A16.3 16.3 0 1 1 948.28 619.79" fill="none" stroke="#e4e6e8" stroke-width="1.6" stroke-linecap="round"/>
<circle cx="928.0" cy="598.2" r="1.5" fill="#e4e6e8"/>
<text x="937.8" y="610.0" font-size="7.6" font-weight="400" text-anchor="middle" fill="#e4e6e8" textLength="13.5" lengthAdjust="spacingAndGlyphs" stroke="#e4e6e8" stroke-width="0.22">35 %</text>
<text x="937.8" y="630.6" font-size="6.4" font-weight="700" text-anchor="middle" fill="#e4e6e8" textLength="37.5" lengthAdjust="spacingAndGlyphs">SWIRL RATE</text>
<line x1="822.2" y1="655.7" x2="897.0" y2="655.7" stroke="#e4e6e8" stroke-width="1.3"/>
<line x1="870.0" y1="655.7" x2="915.0" y2="655.7" stroke="#e4e6e8" stroke-width="1.6" stroke-dasharray="2.2 1 1 0.8 3 1.2 0.8 0.8" opacity="0.8"/>
<circle cx="895.4" cy="655.7" r="2.1" fill="#f0f2f4"/>
<text x="867.8" y="668.8" font-size="6.4" font-weight="700" text-anchor="middle" fill="#e4e6e8" textLength="32.1" lengthAdjust="spacingAndGlyphs">DIFFUSION</text>
<path d="M857.26 717.46A16.4 16.4 0 1 1 878.34 717.46" fill="none" stroke="#e4e6e8" stroke-width="1.6" stroke-linecap="round"/>
<circle cx="864.3" cy="691.9" r="1.5" fill="#e4e6e8"/>
<text x="867.8" y="707.5" font-size="7.2" font-weight="400" text-anchor="middle" fill="#e4e6e8" textLength="21.2" lengthAdjust="spacingAndGlyphs" stroke="#e4e6e8" stroke-width="0.22">-6.92 dB</text>
<text x="867.8" y="728.2" font-size="6.4" font-weight="700" text-anchor="middle" fill="#e4e6e8" textLength="19.7" lengthAdjust="spacingAndGlyphs">LEVEL</text>
<path d="M30.8 750.4V753.6C30.8 755.4 33.4 755.4 33.4 753.6V750.4M32.1 755V759.2" fill="none" stroke="#dcdee0" stroke-width="0.9"/>
<text x="46.8" y="757.6" font-size="9" font-weight="400" text-anchor="start" fill="#dcdee0" textLength="16.2" lengthAdjust="spacingAndGlyphs">440</text>
<polygon points="65.2,753.7 68.0,753.7 66.6,751.5" fill="#dcdee0"/>
<polygon points="65.2,755.1 68.0,755.1 66.6,757.3" fill="#dcdee0"/>
<path d="M85 750.4H87L89.4 758.8H82.6Z" fill="none" stroke="#dcdee0" stroke-width="0.8" stroke-linejoin="round"/>
<line x1="86.0" y1="757.0" x2="88.6" y2="751.0" stroke="#dcdee0" stroke-width="0.7"/>
<text x="100.8" y="757.6" font-size="9" font-weight="400" text-anchor="start" fill="#dcdee0" textLength="15.4" lengthAdjust="spacingAndGlyphs">120</text>
<text x="939.7" y="758.0" font-size="8.8" font-weight="400" text-anchor="start" fill="#dcdee0" textLength="12.0" lengthAdjust="spacingAndGlyphs">CC</text>
<path d="M968.4 751L965.2 753.6L968.4 756.2M965.4 753.6H970.2C973.6 753.6 973.6 758.6 970.2 758.6H965.6" fill="none" stroke="#dcdee0" stroke-width="0.9"/>
<path d="M984 754.8L987.2 757.4L984 760M987 757.4H982.4C979 757.4 979 752.4 982.4 752.4H987" fill="none" stroke="#dcdee0" stroke-width="0.9"/>
<line x1="995.4" y1="762.4" x2="1006.8" y2="751.0" stroke="#9a9c9e" stroke-width="0.7"/>
<line x1="998.6" y1="762.4" x2="1006.8" y2="754.2" stroke="#9a9c9e" stroke-width="0.7"/>
<line x1="1001.8" y1="762.4" x2="1006.8" y2="757.4" stroke="#9a9c9e" stroke-width="0.7"/>
</g>
</svg>
</body></html>
